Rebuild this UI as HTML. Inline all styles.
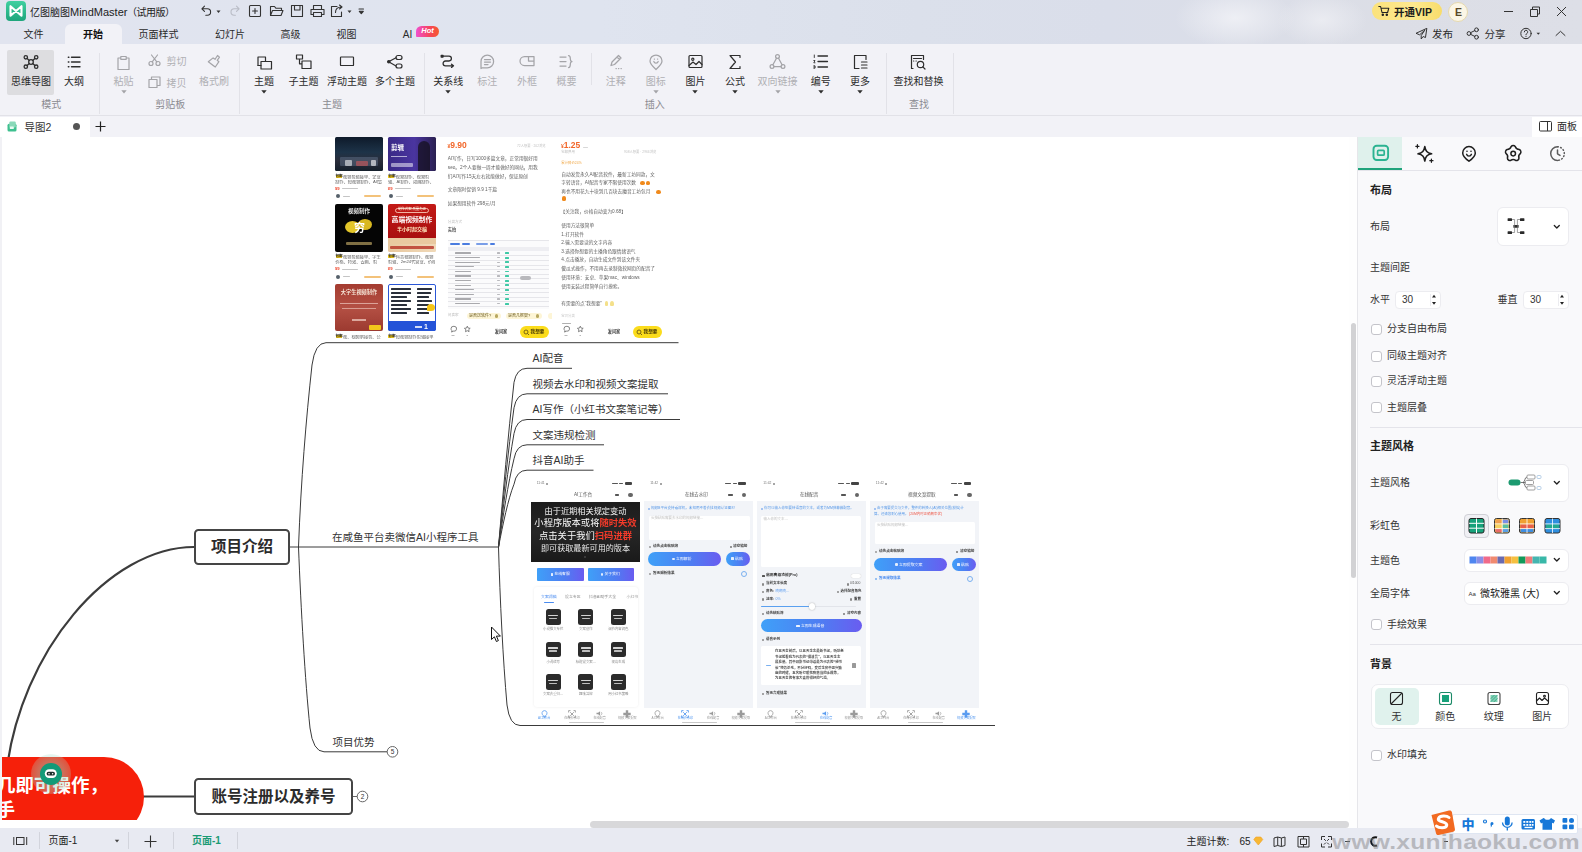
<!DOCTYPE html>
<html lang="zh-CN">
<head>
<meta charset="utf-8">
<title>亿图脑图MindMaster</title>
<style>
*{box-sizing:border-box;margin:0;padding:0}
html,body{width:1582px;height:852px;overflow:hidden;background:#fff}
body{font-family:"Liberation Sans","Noto Sans CJK SC",sans-serif;font-size:10.5px;color:#2a2a2a;position:relative}
.abs{position:absolute}
.t{position:absolute;white-space:nowrap;line-height:1;transform:translate(-50%,-50%)}
.tl{position:absolute;white-space:nowrap;line-height:1;transform:translate(0,-50%)}
svg{position:absolute;overflow:visible}
#titlebar{left:0;top:0;width:1582px;height:44px;background:radial-gradient(ellipse 60px 30px at 1235px 18px,rgba(240,241,246,.9),rgba(240,241,246,0)),radial-gradient(ellipse 45px 26px at 1322px 20px,rgba(238,239,244,.8),rgba(238,239,244,0)),linear-gradient(90deg,#e1e4ef 0%,#dfe4ef 38%,#dbe0eb 58%,#dadeea 70%,#dcdee6 88%,#dddfe7 100%)}
#ribbon{left:0;top:44px;width:1582px;height:72px;background:#f2f2f7;border-bottom:1px solid #e2e2e8}
#tabrow{left:0;top:116px;width:1582px;height:21px;background:#f2f2f7}
#status{left:0;top:828px;width:1582px;height:24px;background:#e8eaf2}
#side{left:1357px;top:137px;width:225px;height:691px;background:#f9f9fb;border-left:1px solid #e6e6ea}
.dis{color:#b0b0b4}
.grp{color:#8a8a90;font-size:10px}
.sep{position:absolute;width:1px;background:#e2e2e8}
.lbl{font-size:10.5px}
.sp{font-size:10px;color:#333}
.box{position:absolute;background:#fff;border:1px solid #ececf0;border-radius:6px}
.cb{position:absolute;width:11px;height:11px;border:1px solid #c4c4ca;border-radius:3px;background:#fff}
</style>
</head>
<body>
<div id="titlebar" class="abs"></div>
<div id="ribbon" class="abs"></div>
<div id="tabrow" class="abs"></div>
<div class="abs" style="left:0;top:820px;width:1357px;height:8px;background:#fff"></div>
<div id="canvas" class="abs" style="left:0;top:137px;width:1357px;height:683px;background:#fff;overflow:hidden">
<div class="abs" style="left:0;top:-137px;width:1357px;height:829px">
<svg style="left:0;top:137px" width="1357" height="692" viewBox="0 137 1357 692"><path d="M6,775 C20,650 110,547 194,547" stroke="#3c3c3c" stroke-width="2.200" fill="none"/><path d="M140,796.500H195" stroke="#3c3c3c" stroke-width="2.200" fill="none"/><path d="M290,547H498.500" stroke="#3a3a3a" stroke-width="1" fill="none"/><path d="M298.500,547C301,480 306,420 312,365Q315,342.700 326,342.700H678.500" stroke="#3a3a3a" stroke-width="1" fill="none"/><path d="M298.500,547C301,610 305,680 310,728Q313,751.800 324,751.800H387" stroke="#3a3a3a" stroke-width="1" fill="none"/><path d="M498.500,547C503.0,493.4 508.0,436.2 514.0,382.3Q516.5,368.3 527,368.3H572" stroke="#3a3a3a" stroke-width="1" fill="none"/><path d="M498.500,547C503.0,501.0 508.0,452.0 514.0,407.8Q516.5,393.8 527,393.8H668" stroke="#3a3a3a" stroke-width="1" fill="none"/><path d="M498.500,547C503.0,508.8 508.0,467.9 514.0,433.5Q516.5,419.5 527,419.5H680" stroke="#3a3a3a" stroke-width="1" fill="none"/><path d="M498.500,547C503.0,516.3 508.0,483.6 514.0,458.8Q516.5,444.8 527,444.8H604" stroke="#3a3a3a" stroke-width="1" fill="none"/><path d="M498.500,547C503.0,524.0 508.0,499.4 514.0,484.2Q516.5,470.2 527,470.2H593.5" stroke="#3a3a3a" stroke-width="1" fill="none"/><path d="M498.500,547C500,600 503,660 507,705Q509.500,725.500 520,725.500H995" stroke="#3a3a3a" stroke-width="1" fill="none"/><circle cx="392.500" cy="751.800" r="5.300" fill="#fff" stroke="#555" stroke-width=".9"/><circle cx="362.500" cy="796.500" r="5.300" fill="#fff" stroke="#555" stroke-width=".9"/><path d="M352.500,796.500h4.700" stroke="#555" stroke-width=".9"/></svg>
<div class="t" style="left:392.5px;top:752.0px;font-size:6.5px;color:#333;font-weight:400;">5</div>
<div class="t" style="left:362.5px;top:796.7px;font-size:6.5px;color:#333;font-weight:400;">2</div>
<div class="abs" style="left:194px;top:528.500px;width:96px;height:36.500px;border:2px solid #454545;border-radius:4.500px;background:#fff"></div>
<div class="t" style="left:242.0px;top:547.0px;font-size:15.5px;color:#2b2b2b;font-weight:700;">项目介绍</div>
<div class="abs" style="left:194px;top:778px;width:159px;height:37px;border:2px solid #454545;border-radius:4.500px;background:#fff"></div>
<div class="t" style="left:273.5px;top:796.5px;font-size:15.5px;color:#2b2b2b;font-weight:700;">账号注册以及养号</div>
<div class="tl" style="left:332.0px;top:536.8px;font-size:10.5px;color:#333;font-weight:400;">在咸鱼平台卖微信AI小程序工具</div>
<div class="tl" style="left:332.5px;top:741.5px;font-size:10.5px;color:#333;font-weight:400;">项目优势</div>
<div class="tl" style="left:532.5px;top:358.0px;font-size:10.5px;color:#333;font-weight:400;">AI配音</div>
<div class="tl" style="left:532.5px;top:383.7px;font-size:10.5px;color:#333;font-weight:400;">视频去水印和视频文案提取</div>
<div class="tl" style="left:532.5px;top:409.3px;font-size:10.5px;color:#333;font-weight:400;">AI写作（小红书文案笔记等）</div>
<div class="tl" style="left:532.5px;top:434.7px;font-size:10.5px;color:#333;font-weight:400;">文案违规检测</div>
<div class="tl" style="left:532.5px;top:460.0px;font-size:10.5px;color:#333;font-weight:400;">抖音AI助手</div>
<div class="abs" style="left:-60px;top:757px;width:204px;height:80px;border-radius:0 40px 40px 0;background:#f6200a"></div>
<div class="tl" style="left:-3.0px;top:786.0px;font-size:18.5px;color:#fff;font-weight:700;letter-spacing:0px">几即可操作，</div>
<div class="tl" style="left:-3.5px;top:810.2px;font-size:18.5px;color:#fff;font-weight:700;">手</div>
<div class="abs" style="left:30.500px;top:753.500px;width:40px;height:40px;border-radius:50%;background:radial-gradient(circle,rgba(150,215,195,.42) 45%,rgba(170,225,205,.26) 70%,rgba(190,230,215,.1) 100%)"></div>
<div class="abs" style="left:39.500px;top:762.500px;width:22.500px;height:22.500px;border-radius:50%;background:#129a78"></div>
<svg style="left:44px;top:768px" width="14" height="12" viewBox="0 0 14 12"><rect x=".8" y="1.300" width="12" height="8.600" rx="4.300" fill="#fff"/><rect x="2.600" y="3.700" width="8.400" height="3.900" rx="1.950" fill="#1d2f2c"/><circle cx="5" cy="5.650" r=".75" fill="#fff"/><circle cx="8.600" cy="5.650" r=".75" fill="#fff"/></svg>
<svg style="left:490px;top:626px" width="13" height="18" viewBox="0 0 13 18"><path d="M1.500 1v12.500l2.900-2.700 2 4.700 2-.9-2-4.500h4z" fill="#fff" stroke="#111" stroke-width="1" stroke-linejoin="round"/></svg>
<div class="abs" style="left:0;top:0;width:2px;height:829px;background:#f1f1f5"></div>
<div class="abs" style="left:0;top:0;width:1357px;height:829px;filter:blur(.45px)">
<div class="abs" style="left:335.0px;top:137.0px;width:48.4px;height:34.3px;background:linear-gradient(180deg,#0e1a2a,#1d3348 45%,#2a2d3a 70%,#15202c);border-radius:1.5px;"></div>
<div class="abs" style="left:340.0px;top:157.0px;width:38.0px;height:9.0px;background:rgba(120,140,170,.35);border-radius:1px;"></div>
<div class="abs" style="left:345.0px;top:160.0px;width:7.0px;height:6.0px;background:rgba(255,255,255,.55);border-radius:1px;"></div>
<div class="abs" style="left:356.0px;top:161.0px;width:12.0px;height:5.0px;background:rgba(220,90,90,.55);border-radius:1px;"></div>
<div class="abs" style="left:371.0px;top:160.0px;width:5.0px;height:6.0px;background:rgba(255,255,255,.6);border-radius:1px;"></div>
<div class="abs" style="left:387.8px;top:137.0px;width:48.4px;height:34.3px;background:linear-gradient(90deg,#3a2a86,#4a35a0 55%,#2a2050);border-radius:1.5px;"></div>
<div class="tl" style="left:391.0px;top:148.0px;font-size:6.5px;color:#fff;font-weight:700;">剪辑</div>
<div class="abs" style="left:391.0px;top:155.5px;width:16.0px;height:1.6px;background:rgba(255,255,255,.6);"></div>
<div class="abs" style="left:391.0px;top:163.0px;width:22.0px;height:3.5px;background:rgba(255,255,255,.5);border-radius:1px;"></div>
<div class="abs" style="left:418.0px;top:141.0px;width:12.0px;height:30.0px;background:rgba(20,16,30,.75);border-radius:6px 6px 0 0;"></div>
<div class="abs" style="left:335.0px;top:203.6px;width:48.4px;height:48.3px;background:#050505;border-radius:2px;"></div>
<div class="t" style="left:359.0px;top:212.0px;font-size:5.5px;color:#e8e8e8;font-weight:700;">视频制作</div>
<div class="abs" style="left:345.0px;top:221.0px;width:15.0px;height:12.0px;background:#e3c62a;border-radius:50%;"></div>
<div class="abs" style="left:358.0px;top:219.0px;width:14.0px;height:11.0px;background:#d9b820;border-radius:50%;"></div>
<div class="t" style="left:359.5px;top:228.0px;font-size:11px;color:#fff;font-weight:700;">穷</div>
<div class="abs" style="left:346.0px;top:241.5px;width:26.0px;height:3.4px;background:rgba(230,200,120,.55);border-radius:1px;"></div>
<div class="abs" style="left:387.8px;top:203.6px;width:48.4px;height:48.3px;background:linear-gradient(180deg,#c31a16,#a90f10 70%,#e9c9a0 71%,#e9c9a0 100%);border-radius:2px;"></div>
<div class="abs" style="left:387.8px;top:243.5px;width:48.4px;height:8.4px;background:linear-gradient(90deg,#e8c8a0,#f0d9b8);border-radius:0 0 2px 2px;"></div>
<div class="abs" style="left:395.0px;top:207.5px;width:34.0px;height:5.5px;background:rgba(255,255,255,.0);border-radius:3px;border:.6px solid rgba(255,220,200,.8);"></div>
<div class="t" style="left:412.0px;top:210.3px;font-size:3.4px;color:#ffe;font-weight:400;">制作式案 质量为正</div>
<div class="t" style="left:412.0px;top:220.0px;font-size:6.8px;color:#fff;font-weight:700;font-family:"Liberation Serif","Noto Serif CJK SC",serif;">高端视频制作</div>
<div class="t" style="left:412.0px;top:228.5px;font-size:5px;color:#ffe9c0;font-weight:700;">半小时起交稿</div>
<div class="abs" style="left:390.0px;top:245.5px;width:44.0px;height:3.6px;background:rgba(180,40,30,.75);border-radius:1px;"></div>
<div class="abs" style="left:335.0px;top:284.2px;width:48.4px;height:47.2px;background:linear-gradient(180deg,#a43c30,#b45044 50%,#9c3a30);border-radius:2px;"></div>
<div class="t" style="left:359.0px;top:293.0px;font-size:5.2px;color:#f6e6d8;font-weight:700;">大字生视频制作</div>
<div class="abs" style="left:340.0px;top:302.5px;width:38.0px;height:1.8px;background:rgba(255,235,225,.55);"></div>
<div class="abs" style="left:342.0px;top:307.5px;width:34.0px;height:1.8px;background:rgba(255,235,225,.5);"></div>
<div class="abs" style="left:352.0px;top:319.0px;width:14.0px;height:2.4px;background:rgba(255,235,225,.6);"></div>
<div class="abs" style="left:368.5px;top:324.5px;width:12.5px;height:5.0px;background:#f2c81c;border-radius:1px;"></div>
<div class="abs" style="left:387.8px;top:284.2px;width:48.4px;height:47.2px;background:#fff;border-radius:2px;border:1.500px solid #2a56d6;"></div>
<div class="abs" style="left:391.0px;top:287.5px;width:20.0px;height:2.2px;background:#2a2f3a;border-radius:0.5px;"></div>
<div class="abs" style="left:417.0px;top:287.5px;width:15.0px;height:2.2px;background:#2a2f3a;border-radius:0.5px;"></div>
<div class="abs" style="left:391.0px;top:291.6px;width:20.0px;height:2.2px;background:#2a2f3a;border-radius:0.5px;"></div>
<div class="abs" style="left:417.0px;top:291.6px;width:14.0px;height:2.2px;background:#2a2f3a;border-radius:0.5px;"></div>
<div class="abs" style="left:391.0px;top:295.7px;width:16.0px;height:2.2px;background:#2a2f3a;border-radius:0.5px;"></div>
<div class="abs" style="left:417.0px;top:295.7px;width:12.0px;height:2.2px;background:#2a2f3a;border-radius:0.5px;"></div>
<div class="abs" style="left:391.0px;top:299.8px;width:20.0px;height:2.2px;background:#2a2f3a;border-radius:0.5px;"></div>
<div class="abs" style="left:417.0px;top:299.8px;width:15.0px;height:2.2px;background:#2a2f3a;border-radius:0.5px;"></div>
<div class="abs" style="left:391.0px;top:303.9px;width:16.0px;height:2.2px;background:#2a2f3a;border-radius:0.5px;"></div>
<div class="abs" style="left:417.0px;top:303.9px;width:12.0px;height:2.2px;background:#2a2f3a;border-radius:0.5px;"></div>
<div class="abs" style="left:391.0px;top:308.0px;width:20.0px;height:2.2px;background:#2a2f3a;border-radius:0.5px;"></div>
<div class="abs" style="left:417.0px;top:308.0px;width:14.0px;height:2.2px;background:#2a2f3a;border-radius:0.5px;"></div>
<div class="abs" style="left:391.0px;top:312.1px;width:16.0px;height:2.2px;background:#2a2f3a;border-radius:0.5px;"></div>
<div class="abs" style="left:417.0px;top:312.1px;width:12.0px;height:2.2px;background:#2a2f3a;border-radius:0.5px;"></div>
<div class="abs" style="left:387.8px;top:321.0px;width:48.4px;height:10.4px;background:#2453d8;border-radius:0 0 2px 2px;"></div>
<div class="t" style="left:426.0px;top:326.3px;font-size:7px;color:#fff;font-weight:700;">1</div>
<div class="abs" style="left:415.0px;top:326.0px;width:7.0px;height:2.0px;background:rgba(255,255,255,.8);"></div>
<div class="abs" style="left:426.5px;top:304.0px;width:8.0px;height:7.0px;background:#f5c518;border-radius:50% 50% 50% 10%;"></div>
<div class="abs" style="left:335.5px;top:175.0px;width:6.0px;height:3.0px;background:#f2cb1a;border-radius:0.5px;"></div>
<div class="tl" style="left:335.5px;top:176.5px;font-size:3.6px;color:#222;font-weight:700;">包邮</div>
<div class="tl" style="left:343.0px;top:176.7px;font-size:4.2px;color:#5a5a5a;font-weight:400;max-width:40px;overflow:hidden;">视频剪辑接单、企业</div>
<div class="tl" style="left:335.3px;top:182.0px;font-size:4.2px;color:#5a5a5a;font-weight:400;max-width:47px;overflow:hidden;">制作、短视频制作、AI绘制</div>
<div class="tl" style="left:335.0px;top:188.6px;font-size:4.2px;color:#f0452a;font-weight:700;">¥9</div>
<div class="abs" style="left:342.0px;top:187.7px;width:16.0px;height:1.8px;background:#c6c6c6;border-radius:1px;"></div>
<div class="abs" style="left:336.0px;top:194.4px;width:4.0px;height:4.0px;background:#55606a;border-radius:50%;"></div>
<div class="abs" style="left:343.0px;top:195.6px;width:7.0px;height:1.6px;background:#c4c4c4;border-radius:1px;"></div>
<div class="abs" style="left:364.0px;top:195.4px;width:17.0px;height:2.0px;background:#f3c27a;border-radius:1px;"></div>
<div class="abs" style="left:388.3px;top:175.0px;width:6.0px;height:3.0px;background:#f2cb1a;border-radius:0.5px;"></div>
<div class="tl" style="left:388.3px;top:176.5px;font-size:3.6px;color:#222;font-weight:700;">包邮</div>
<div class="tl" style="left:395.8px;top:176.7px;font-size:4.2px;color:#5a5a5a;font-weight:400;max-width:40px;overflow:hidden;">视频制作、视频剪</div>
<div class="tl" style="left:388.1px;top:182.0px;font-size:4.2px;color:#5a5a5a;font-weight:400;max-width:47px;overflow:hidden;">辑、AI制作、动画制作、</div>
<div class="tl" style="left:387.8px;top:188.6px;font-size:4.2px;color:#f0452a;font-weight:700;">¥9</div>
<div class="abs" style="left:394.8px;top:187.7px;width:16.0px;height:1.8px;background:#c6c6c6;border-radius:1px;"></div>
<div class="abs" style="left:388.8px;top:194.4px;width:4.0px;height:4.0px;background:#55606a;border-radius:50%;"></div>
<div class="abs" style="left:395.8px;top:195.6px;width:7.0px;height:1.6px;background:#c4c4c4;border-radius:1px;"></div>
<div class="abs" style="left:416.8px;top:195.4px;width:17.0px;height:2.0px;background:#f3c27a;border-radius:1px;"></div>
<div class="abs" style="left:335.5px;top:255.0px;width:6.0px;height:3.0px;background:#f2cb1a;border-radius:0.5px;"></div>
<div class="tl" style="left:335.5px;top:256.5px;font-size:3.6px;color:#222;font-weight:700;">包邮</div>
<div class="tl" style="left:343.0px;top:256.7px;font-size:4.2px;color:#5a5a5a;font-weight:400;max-width:40px;overflow:hidden;">视频剪辑接单、学生</div>
<div class="tl" style="left:335.3px;top:262.0px;font-size:4.2px;color:#5a5a5a;font-weight:400;max-width:47px;overflow:hidden;">价格、特效、去画、剪</div>
<div class="tl" style="left:335.0px;top:269.4px;font-size:4.2px;color:#f0452a;font-weight:700;">¥9</div>
<div class="abs" style="left:342.0px;top:268.5px;width:16.0px;height:1.8px;background:#c6c6c6;border-radius:1px;"></div>
<div class="abs" style="left:336.0px;top:274.7px;width:4.0px;height:4.0px;background:#55606a;border-radius:50%;"></div>
<div class="abs" style="left:343.0px;top:275.9px;width:7.0px;height:1.6px;background:#c4c4c4;border-radius:1px;"></div>
<div class="abs" style="left:364.0px;top:275.7px;width:17.0px;height:2.0px;background:#f3c27a;border-radius:1px;"></div>
<div class="abs" style="left:388.3px;top:255.0px;width:6.0px;height:3.0px;background:#f2cb1a;border-radius:0.5px;"></div>
<div class="tl" style="left:388.3px;top:256.5px;font-size:3.6px;color:#222;font-weight:700;">包邮</div>
<div class="tl" style="left:395.8px;top:256.7px;font-size:4.2px;color:#5a5a5a;font-weight:400;max-width:40px;overflow:hidden;">抖音视频制作、视频</div>
<div class="tl" style="left:388.1px;top:262.0px;font-size:4.2px;color:#5a5a5a;font-weight:400;max-width:47px;overflow:hidden;">剪辑、2m24代营业、价格</div>
<div class="tl" style="left:387.8px;top:269.4px;font-size:4.2px;color:#f0452a;font-weight:700;">¥9</div>
<div class="abs" style="left:394.8px;top:268.5px;width:16.0px;height:1.8px;background:#c6c6c6;border-radius:1px;"></div>
<div class="abs" style="left:388.8px;top:274.7px;width:4.0px;height:4.0px;background:#55606a;border-radius:50%;"></div>
<div class="abs" style="left:395.8px;top:275.9px;width:7.0px;height:1.6px;background:#c4c4c4;border-radius:1px;"></div>
<div class="abs" style="left:416.8px;top:275.7px;width:17.0px;height:2.0px;background:#f3c27a;border-radius:1px;"></div>
<div class="abs" style="left:335.5px;top:335.1px;width:6.0px;height:3.0px;background:#f2cb1a;border-radius:0.5px;"></div>
<div class="tl" style="left:335.5px;top:336.6px;font-size:3.6px;color:#222;font-weight:700;">包邮</div>
<div class="tl" style="left:343.0px;top:336.8px;font-size:4.2px;color:#5a5a5a;font-weight:400;max-width:40px;overflow:hidden;">视、视频承接剪、公</div>
<div class="abs" style="left:388.3px;top:335.1px;width:6.0px;height:3.0px;background:#f2cb1a;border-radius:0.5px;"></div>
<div class="tl" style="left:388.3px;top:336.6px;font-size:3.6px;color:#222;font-weight:700;">包邮</div>
<div class="tl" style="left:395.8px;top:336.8px;font-size:4.2px;color:#5a5a5a;font-weight:400;max-width:40px;overflow:hidden;">短视频制作剪辑接单</div>
<div class="tl" style="left:447.5px;top:144.8px;font-size:8.5px;color:#f2672a;font-weight:700;"><span style="font-size:5px">¥</span>9.90</div>
<div class="tl" style="left:517.0px;top:146.5px;font-size:3.3px;color:#c4c4c4;font-weight:400;">72人想要 · 202浏览</div>
<div class="tl" style="left:447.8px;top:158.9px;font-size:4.7px;color:#5e5e5e;font-weight:400;">AI写作，日写1000多篇文章，正常用很好用</div>
<div class="tl" style="left:447.8px;top:167.7px;font-size:4.7px;color:#5e5e5e;font-weight:400;">seo。2个人要做一周才能做好的网站，用我</div>
<div class="tl" style="left:447.8px;top:176.5px;font-size:4.7px;color:#5e5e5e;font-weight:400;">们AI写作15天左右就能做好，保证原创</div>
<div class="tl" style="left:447.8px;top:190.2px;font-size:4.7px;color:#5e5e5e;font-weight:400;">文章限时促销 9.9  1千篇</div>
<div class="tl" style="left:447.8px;top:204.4px;font-size:4.7px;color:#5e5e5e;font-weight:400;">如果想用软件 298元/月</div>
<div class="tl" style="left:447.8px;top:222.8px;font-size:3.6px;color:#bdbdbd;font-weight:400;">分类方式</div>
<div class="tl" style="left:447.8px;top:230.0px;font-size:4.2px;color:#555;font-weight:700;">实拍</div>
<div class="abs" style="left:447.5px;top:240.0px;width:101.0px;height:69.0px;background:#fbfbfc;border-top:.5px solid #e6e6ea;"></div>
<div class="abs" style="left:449.5px;top:243.0px;width:10.0px;height:1.6px;background:#4a7ce0;border-radius:1px;"></div>
<div class="abs" style="left:461.5px;top:243.0px;width:8.0px;height:1.6px;background:#4a7ce0;border-radius:1px;"></div>
<div class="abs" style="left:475.5px;top:243.0px;width:12.0px;height:1.6px;background:#7a9ee8;border-radius:1px;"></div>
<div class="abs" style="left:489.5px;top:243.0px;width:5.0px;height:1.6px;background:#4a7ce0;border-radius:1px;"></div>
<div class="abs" style="left:447.5px;top:247.0px;width:101.0px;height:3.5px;background:#eeeef2;"></div>
<div class="abs" style="left:447.5px;top:255.3px;width:101.0px;height:0.4px;background:#e6e6ea;"></div>
<div class="abs" style="left:454.5px;top:252.4px;width:16.0px;height:1.3px;background:#a9a9ad;border-radius:0.5px;"></div>
<div class="abs" style="left:496.5px;top:252.4px;width:3.0px;height:1.3px;background:#b9b9bd;border-radius:0.5px;"></div>
<div class="abs" style="left:504.5px;top:252.2px;width:4.5px;height:1.8px;background:#3fc9a6;border-radius:0.5px;"></div>
<div class="abs" style="left:447.5px;top:259.9px;width:101.0px;height:0.4px;background:#e6e6ea;"></div>
<div class="abs" style="left:454.5px;top:257.0px;width:25.0px;height:1.3px;background:#a9a9ad;border-radius:0.5px;"></div>
<div class="abs" style="left:496.5px;top:257.0px;width:3.0px;height:1.3px;background:#b9b9bd;border-radius:0.5px;"></div>
<div class="abs" style="left:504.5px;top:256.8px;width:4.5px;height:1.8px;background:#3fc9a6;border-radius:0.5px;"></div>
<div class="abs" style="left:447.5px;top:264.5px;width:101.0px;height:0.4px;background:#e6e6ea;"></div>
<div class="abs" style="left:454.5px;top:261.6px;width:25.0px;height:1.3px;background:#a9a9ad;border-radius:0.5px;"></div>
<div class="abs" style="left:496.5px;top:261.6px;width:3.0px;height:1.3px;background:#b9b9bd;border-radius:0.5px;"></div>
<div class="abs" style="left:504.5px;top:261.4px;width:4.5px;height:1.8px;background:#3fc9a6;border-radius:0.5px;"></div>
<div class="abs" style="left:447.5px;top:269.1px;width:101.0px;height:0.4px;background:#e6e6ea;"></div>
<div class="abs" style="left:454.5px;top:266.2px;width:19.0px;height:1.3px;background:#a9a9ad;border-radius:0.5px;"></div>
<div class="abs" style="left:496.5px;top:266.2px;width:3.0px;height:1.3px;background:#b9b9bd;border-radius:0.5px;"></div>
<div class="abs" style="left:504.5px;top:266.0px;width:4.5px;height:1.8px;background:#3fc9a6;border-radius:0.5px;"></div>
<div class="abs" style="left:447.5px;top:273.7px;width:101.0px;height:0.4px;background:#e6e6ea;"></div>
<div class="abs" style="left:454.5px;top:270.8px;width:16.0px;height:1.3px;background:#a9a9ad;border-radius:0.5px;"></div>
<div class="abs" style="left:496.5px;top:270.8px;width:3.0px;height:1.3px;background:#b9b9bd;border-radius:0.5px;"></div>
<div class="abs" style="left:504.5px;top:270.6px;width:4.5px;height:1.8px;background:#3fc9a6;border-radius:0.5px;"></div>
<div class="abs" style="left:447.5px;top:278.3px;width:101.0px;height:0.4px;background:#e6e6ea;"></div>
<div class="abs" style="left:454.5px;top:275.4px;width:16.0px;height:1.3px;background:#a9a9ad;border-radius:0.5px;"></div>
<div class="abs" style="left:496.5px;top:275.4px;width:3.0px;height:1.3px;background:#b9b9bd;border-radius:0.5px;"></div>
<div class="abs" style="left:504.5px;top:275.2px;width:4.5px;height:1.8px;background:#3fc9a6;border-radius:0.5px;"></div>
<div class="abs" style="left:447.5px;top:282.9px;width:101.0px;height:0.4px;background:#e6e6ea;"></div>
<div class="abs" style="left:454.5px;top:280.0px;width:16.0px;height:1.3px;background:#a9a9ad;border-radius:0.5px;"></div>
<div class="abs" style="left:496.5px;top:280.0px;width:3.0px;height:1.3px;background:#b9b9bd;border-radius:0.5px;"></div>
<div class="abs" style="left:504.5px;top:279.8px;width:4.5px;height:1.8px;background:#3fc9a6;border-radius:0.5px;"></div>
<div class="abs" style="left:447.5px;top:287.5px;width:101.0px;height:0.4px;background:#e6e6ea;"></div>
<div class="abs" style="left:454.5px;top:284.6px;width:16.0px;height:1.3px;background:#a9a9ad;border-radius:0.5px;"></div>
<div class="abs" style="left:496.5px;top:284.6px;width:3.0px;height:1.3px;background:#b9b9bd;border-radius:0.5px;"></div>
<div class="abs" style="left:504.5px;top:284.4px;width:4.5px;height:1.8px;background:#3fc9a6;border-radius:0.5px;"></div>
<div class="abs" style="left:447.5px;top:292.1px;width:101.0px;height:0.4px;background:#e6e6ea;"></div>
<div class="abs" style="left:454.5px;top:289.2px;width:19.0px;height:1.3px;background:#a9a9ad;border-radius:0.5px;"></div>
<div class="abs" style="left:496.5px;top:289.2px;width:3.0px;height:1.3px;background:#b9b9bd;border-radius:0.5px;"></div>
<div class="abs" style="left:504.5px;top:289.0px;width:4.5px;height:1.8px;background:#3fc9a6;border-radius:0.5px;"></div>
<div class="abs" style="left:447.5px;top:296.7px;width:101.0px;height:0.4px;background:#e6e6ea;"></div>
<div class="abs" style="left:454.5px;top:293.8px;width:19.0px;height:1.3px;background:#a9a9ad;border-radius:0.5px;"></div>
<div class="abs" style="left:496.5px;top:293.8px;width:3.0px;height:1.3px;background:#b9b9bd;border-radius:0.5px;"></div>
<div class="abs" style="left:504.5px;top:293.6px;width:4.5px;height:1.8px;background:#3fc9a6;border-radius:0.5px;"></div>
<div class="abs" style="left:447.5px;top:301.3px;width:101.0px;height:0.4px;background:#e6e6ea;"></div>
<div class="abs" style="left:454.5px;top:298.4px;width:16.0px;height:1.3px;background:#a9a9ad;border-radius:0.5px;"></div>
<div class="abs" style="left:496.5px;top:298.4px;width:3.0px;height:1.3px;background:#b9b9bd;border-radius:0.5px;"></div>
<div class="abs" style="left:504.5px;top:298.2px;width:4.5px;height:1.8px;background:#3fc9a6;border-radius:0.5px;"></div>
<div class="abs" style="left:447.5px;top:305.9px;width:101.0px;height:0.4px;background:#e6e6ea;"></div>
<div class="abs" style="left:454.5px;top:303.0px;width:25.0px;height:1.3px;background:#a9a9ad;border-radius:0.5px;"></div>
<div class="abs" style="left:496.5px;top:303.0px;width:3.0px;height:1.3px;background:#b9b9bd;border-radius:0.5px;"></div>
<div class="abs" style="left:504.5px;top:302.8px;width:4.5px;height:1.8px;background:#3fc9a6;border-radius:0.5px;"></div>
<div class="abs" style="left:519.5px;top:276.0px;width:11.0px;height:4.0px;background:#b8b8bc;border-radius:2px;"></div>
<div class="tl" style="left:447.8px;top:316.0px;font-size:3.6px;color:#bdbdbd;font-weight:400;">问卖家</div>
<div class="abs" style="left:466.5px;top:312.5px;width:34.0px;height:6.5px;background:#fdf5d6;border-radius:3px;"></div>
<div class="tl" style="left:469.0px;top:316.0px;font-size:4px;color:#6a5a20;font-weight:400;">是否送软件?</div>
<div class="abs" style="left:494.5px;top:314.0px;width:3.5px;height:3.5px;background:#b8a860;border-radius:50%;"></div>
<div class="abs" style="left:505.5px;top:312.5px;width:36.0px;height:6.5px;background:#fdf5d6;border-radius:3px;"></div>
<div class="tl" style="left:508.0px;top:316.0px;font-size:4px;color:#6a5a20;font-weight:400;">是否几框架?</div>
<div class="abs" style="left:535.5px;top:314.0px;width:3.5px;height:3.5px;background:#b8a860;border-radius:50%;"></div>
<div class="abs" style="left:547.5px;top:312.5px;width:4.0px;height:6.5px;background:#fdf5d6;border-radius:3px 0 0 3px;"></div>
<svg style="left:449.5px;top:325px" width="24" height="13" viewBox="0 0 24 13" fill="none" stroke="#666" stroke-width=".8"><path d="M1 3.800a2.800 2.500 0 1 1 2.200 2.400l-1.600 .9 .3-1.500a2.400 2.400 0 0 1-.9-1.800z"/><path d="M17.300 1.200l.9 1.900 2 .2-1.500 1.400 .4 2-1.800-1-1.800 1 .4-2-1.500-1.400 2-.2z"/><path d="M1.500 10.500h3M16.500 10.500h1.500" stroke="#bbb" stroke-width="1"/></svg>
<div class="t" style="left:501.0px;top:332.0px;font-size:4.2px;color:#444;font-weight:700;">发问家</div>
<div class="abs" style="left:519.5px;top:326.3px;width:29.0px;height:11.6px;background:#fbdc1c;border-radius:6px;"></div>
<svg style="left:523.0px;top:329px" width="7" height="7" viewBox="0 0 7 7" fill="none" stroke="#5a4a10" stroke-width=".8"><circle cx="3" cy="3" r="2"/><path d="M4.500 4.500l1.500 1.500"/></svg>
<div class="t" style="left:537.5px;top:332.2px;font-size:4.6px;color:#4a3c08;font-weight:700;">我想要</div>
<div class="tl" style="left:561.0px;top:144.8px;font-size:8.5px;color:#f2672a;font-weight:700;"><span style="font-size:5px">¥</span>1.25</div>
<div class="abs" style="left:583.0px;top:146.5px;width:5.0px;height:1.5px;background:#d8d8d8;border-radius:1px;"></div>
<div class="tl" style="left:561.3px;top:153.3px;font-size:3.4px;color:#c4c4c4;font-weight:400;">包邮费用</div>
<div class="tl" style="left:624.0px;top:153.3px;font-size:3.3px;color:#c4c4c4;font-weight:400;">908人想要 · 2966浏览</div>
<div class="tl" style="left:561.3px;top:163.5px;font-size:3.4px;color:#f0a848;font-weight:400;">累计降价24%</div>
<div class="tl" style="left:561.3px;top:174.7px;font-size:4.7px;color:#5e5e5e;font-weight:400;">自动发货永久AI配音软件，最新工坊同款，文</div>
<div class="tl" style="left:561.3px;top:183.0px;font-size:4.7px;color:#5e5e5e;font-weight:400;">字转语音，AI配音专家不限使用次数</div>
<div class="abs" style="left:640.0px;top:181.0px;width:4.5px;height:4.3px;background:#f08a1c;border-radius:50% 50% 40% 40%;"></div>
<div class="abs" style="left:645.5px;top:181.0px;width:4.5px;height:4.3px;background:#f08a1c;border-radius:50% 50% 40% 40%;"></div>
<div class="tl" style="left:561.3px;top:191.5px;font-size:4.7px;color:#5e5e5e;font-weight:400;">再也不用花九十块到几百块去魔音工坊包月</div>
<div class="abs" style="left:656.0px;top:189.5px;width:4.5px;height:4.3px;background:#f08a1c;border-radius:50% 50% 40% 40%;"></div>
<div class="abs" style="left:561.5px;top:196.3px;width:4.5px;height:4.3px;background:#f08a1c;border-radius:50% 50% 40% 40%;"></div>
<div class="tl" style="left:560.5px;top:212.2px;font-size:4.7px;color:#5e5e5e;font-weight:400;">【关注我，价格自动变为0.68】</div>
<div class="tl" style="left:561.3px;top:226.3px;font-size:4.7px;color:#5e5e5e;font-weight:400;">使用方法很简单</div>
<div class="tl" style="left:561.3px;top:234.8px;font-size:4.7px;color:#5e5e5e;font-weight:400;">1.打开软件</div>
<div class="tl" style="left:561.3px;top:243.2px;font-size:4.7px;color:#5e5e5e;font-weight:400;">2.输入需要读的文字内容</div>
<div class="tl" style="left:561.3px;top:251.9px;font-size:4.7px;color:#5e5e5e;font-weight:400;">3.选择你想要的主播角色跟情绪语气</div>
<div class="tl" style="left:561.3px;top:260.4px;font-size:4.7px;color:#5e5e5e;font-weight:400;">4.点击播放，自动生成文件到该文件夹</div>
<div class="tl" style="left:561.3px;top:269.4px;font-size:4.7px;color:#5e5e5e;font-weight:400;">傻瓜式操作，不用再去录制微软网页的配音了</div>
<div class="tl" style="left:561.3px;top:278.0px;font-size:4.7px;color:#5e5e5e;font-weight:400;">使用环境：安卓、苹果mac、windows</div>
<div class="tl" style="left:561.3px;top:286.5px;font-size:4.7px;color:#5e5e5e;font-weight:400;">使用安装过程简单自行摸索。</div>
<div class="tl" style="left:561.3px;top:303.5px;font-size:4.7px;color:#5e5e5e;font-weight:400;">有需要的点“我想要”</div>
<div class="abs" style="left:604.5px;top:301.3px;width:3.6px;height:5.0px;background:#f4e08a;border-radius:50% 50% 30% 30%;"></div>
<div class="abs" style="left:610.0px;top:301.3px;width:3.6px;height:5.0px;background:#f4e08a;border-radius:50% 50% 30% 30%;"></div>
<div class="tl" style="left:561.3px;top:317.0px;font-size:3.4px;color:#c8c8c8;font-weight:400;">宝贝分类</div>
<div class="abs" style="left:561.5px;top:322.5px;width:9.0px;height:1.3px;background:#b0b0b0;border-radius:1px;"></div>
<svg style="left:563.0px;top:325px" width="24" height="13" viewBox="0 0 24 13" fill="none" stroke="#666" stroke-width=".8"><path d="M1 3.800a2.800 2.500 0 1 1 2.200 2.400l-1.600 .9 .3-1.500a2.400 2.400 0 0 1-.9-1.800z"/><path d="M17.300 1.200l.9 1.900 2 .2-1.500 1.400 .4 2-1.800-1-1.800 1 .4-2-1.500-1.400 2-.2z"/><path d="M1.500 10.500h3M16.500 10.500h1.500" stroke="#bbb" stroke-width="1"/></svg>
<div class="t" style="left:614.0px;top:332.0px;font-size:4.2px;color:#444;font-weight:700;">发问家</div>
<div class="abs" style="left:632.5px;top:326.3px;width:29.0px;height:11.6px;background:#fbdc1c;border-radius:6px;"></div>
<svg style="left:636.0px;top:329px" width="7" height="7" viewBox="0 0 7 7" fill="none" stroke="#5a4a10" stroke-width=".8"><circle cx="3" cy="3" r="2"/><path d="M4.500 4.500l1.500 1.500"/></svg>
<div class="t" style="left:650.5px;top:332.2px;font-size:4.6px;color:#4a3c08;font-weight:700;">我想要</div>
<div class="abs" style="left:530.7px;top:477.5px;width:109.7px;height:245.5px;background:#fff;"></div>
<div class="abs" style="left:530.7px;top:477.5px;width:109.7px;height:23.5px;background:#fff;"></div>
<div class="tl" style="left:536.7px;top:483.5px;font-size:3.3px;color:#777;font-weight:400;">11:41</div>
<div class="abs" style="left:546.2px;top:482.6px;width:2.0px;height:2.0px;background:#888;border-radius:50%;"></div>
<div class="abs" style="left:611.7px;top:482.7px;width:6.0px;height:1.6px;background:#555;border-radius:0.7px;"></div>
<div class="abs" style="left:619.2px;top:482.7px;width:4.0px;height:1.6px;background:#555;border-radius:0.7px;"></div>
<div class="abs" style="left:624.7px;top:482.2px;width:7.5px;height:2.6px;background:#444;border-radius:1px;"></div>
<div class="t" style="left:583.1px;top:495.3px;font-size:4.6px;color:#555;font-weight:400;">AI工作台</div>
<div class="abs" style="left:614.7px;top:494.0px;width:4.5px;height:1.5px;background:#555;border-radius:0.7px;"></div>
<div class="abs" style="left:628.2px;top:492.5px;width:4.6px;height:4.6px;background:#666;border-radius:50%;"></div>
<div class="abs" style="left:530.7px;top:707.5px;width:109.7px;height:15.5px;background:#fff;"></div>
<svg style="left:540.7px;top:709.500px" width="7" height="8" viewBox="0 0 7 8" fill="none" stroke="#5a9cf0" stroke-width=".8"><path d="M3.500 .6a2.600 2.600 0 0 1 1.300 4.800v1h-2.600v-1a2.600 2.600 0 0 1 1.300-4.800zM2.500 7.600h2"/></svg>
<div class="t" style="left:544.2px;top:719.3px;font-size:3.1px;color:#5a9cf0;font-weight:400;">AI工作台</div>
<svg style="left:567.9px;top:709.500px" width="8" height="8" viewBox="0 0 8 8" fill="none" stroke="#9a9a9a" stroke-width=".9"><path d="M.6 2.500v-1.900h1.900M5.500 .6h1.900v1.900M7.400 5.500v1.900h-1.900M2.500 7.400h-1.900v-1.900M2.200 2.200l3.600 3.600M5.800 2.200l-3.600 3.600"/></svg>
<div class="t" style="left:571.9px;top:719.3px;font-size:3.1px;color:#9a9a9a;font-weight:400;">在线去水印</div>
<svg style="left:595.6px;top:711px" width="8" height="5" viewBox="0 0 8 5" fill="#9a9a9a"><path d="M.5 1.700h1.600l2-1.500v4.600l-2-1.500h-1.600z"/><path d="M5.300 1.200c.8.800.8 1.800 0 2.600" fill="none" stroke="#9a9a9a" stroke-width=".7"/></svg>
<div class="t" style="left:599.6px;top:719.3px;font-size:3.1px;color:#9a9a9a;font-weight:400;">在线配音</div>
<svg style="left:623.3px;top:709.500px" width="8" height="8" viewBox="0 0 8 8" fill="#9a9a9a"><path d="M2.800 .3h2.400v2.500h2.500v2.400h-2.500v2.500h-2.400v-2.500h-2.500v-2.400h2.500z"/></svg>
<div class="t" style="left:627.3px;top:719.3px;font-size:3.1px;color:#9a9a9a;font-weight:400;">视频文案提取</div>
<div class="abs" style="left:568.7px;top:721.8px;width:35.0px;height:0.9px;background:#c8c8c8;border-radius:0.5px;"></div>
<div class="abs" style="left:644.2px;top:477.5px;width:109.3px;height:245.5px;background:#f2f4f8;"></div>
<div class="abs" style="left:644.2px;top:477.5px;width:109.3px;height:23.5px;background:#fff;"></div>
<div class="tl" style="left:650.2px;top:483.5px;font-size:3.3px;color:#777;font-weight:400;">11:42</div>
<div class="abs" style="left:659.7px;top:482.6px;width:2.0px;height:2.0px;background:#888;border-radius:50%;"></div>
<div class="abs" style="left:725.2px;top:482.7px;width:6.0px;height:1.6px;background:#555;border-radius:0.7px;"></div>
<div class="abs" style="left:732.7px;top:482.7px;width:4.0px;height:1.6px;background:#555;border-radius:0.7px;"></div>
<div class="abs" style="left:738.2px;top:482.2px;width:7.5px;height:2.6px;background:#444;border-radius:1px;"></div>
<div class="t" style="left:696.4px;top:495.3px;font-size:4.6px;color:#555;font-weight:400;">在线去水印</div>
<div class="abs" style="left:728.2px;top:494.0px;width:4.5px;height:1.5px;background:#555;border-radius:0.7px;"></div>
<div class="abs" style="left:741.7px;top:492.5px;width:4.6px;height:4.6px;background:#666;border-radius:50%;"></div>
<div class="abs" style="left:644.2px;top:707.5px;width:109.3px;height:15.5px;background:#fff;"></div>
<svg style="left:654.2px;top:709.500px" width="7" height="8" viewBox="0 0 7 8" fill="none" stroke="#9a9a9a" stroke-width=".8"><path d="M3.500 .6a2.600 2.600 0 0 1 1.300 4.800v1h-2.600v-1a2.600 2.600 0 0 1 1.300-4.800zM2.500 7.600h2"/></svg>
<div class="t" style="left:657.7px;top:719.3px;font-size:3.1px;color:#9a9a9a;font-weight:400;">AI工作台</div>
<svg style="left:681.4px;top:709.500px" width="8" height="8" viewBox="0 0 8 8" fill="none" stroke="#5a9cf0" stroke-width=".9"><path d="M.6 2.500v-1.900h1.900M5.500 .6h1.900v1.900M7.400 5.500v1.900h-1.900M2.500 7.400h-1.900v-1.900M2.200 2.200l3.600 3.600M5.800 2.200l-3.600 3.600"/></svg>
<div class="t" style="left:685.4px;top:719.3px;font-size:3.1px;color:#5a9cf0;font-weight:400;">在线去水印</div>
<svg style="left:709.1px;top:711px" width="8" height="5" viewBox="0 0 8 5" fill="#9a9a9a"><path d="M.5 1.700h1.600l2-1.500v4.600l-2-1.500h-1.600z"/><path d="M5.300 1.200c.8.800.8 1.800 0 2.600" fill="none" stroke="#9a9a9a" stroke-width=".7"/></svg>
<div class="t" style="left:713.1px;top:719.3px;font-size:3.1px;color:#9a9a9a;font-weight:400;">在线配音</div>
<svg style="left:736.8px;top:709.500px" width="8" height="8" viewBox="0 0 8 8" fill="#9a9a9a"><path d="M2.800 .3h2.400v2.500h2.500v2.400h-2.500v2.500h-2.400v-2.500h-2.500v-2.400h2.500z"/></svg>
<div class="t" style="left:740.8px;top:719.3px;font-size:3.1px;color:#9a9a9a;font-weight:400;">视频文案提取</div>
<div class="abs" style="left:682.2px;top:721.8px;width:35.0px;height:0.9px;background:#c8c8c8;border-radius:0.5px;"></div>
<div class="abs" style="left:757.3px;top:477.5px;width:108.7px;height:245.5px;background:#f2f4f8;"></div>
<div class="abs" style="left:757.3px;top:477.5px;width:108.7px;height:23.5px;background:#fff;"></div>
<div class="tl" style="left:763.3px;top:483.5px;font-size:3.3px;color:#777;font-weight:400;">11:42</div>
<div class="abs" style="left:772.8px;top:482.6px;width:2.0px;height:2.0px;background:#888;border-radius:50%;"></div>
<div class="abs" style="left:838.3px;top:482.7px;width:6.0px;height:1.6px;background:#555;border-radius:0.7px;"></div>
<div class="abs" style="left:845.8px;top:482.7px;width:4.0px;height:1.6px;background:#555;border-radius:0.7px;"></div>
<div class="abs" style="left:851.3px;top:482.2px;width:7.5px;height:2.6px;background:#444;border-radius:1px;"></div>
<div class="t" style="left:809.1px;top:495.3px;font-size:4.6px;color:#555;font-weight:400;">在线配音</div>
<div class="abs" style="left:841.3px;top:494.0px;width:4.5px;height:1.5px;background:#555;border-radius:0.7px;"></div>
<div class="abs" style="left:854.8px;top:492.5px;width:4.6px;height:4.6px;background:#666;border-radius:50%;"></div>
<div class="abs" style="left:757.3px;top:707.5px;width:108.7px;height:15.5px;background:#fff;"></div>
<svg style="left:767.3px;top:709.500px" width="7" height="8" viewBox="0 0 7 8" fill="none" stroke="#9a9a9a" stroke-width=".8"><path d="M3.500 .6a2.600 2.600 0 0 1 1.300 4.800v1h-2.600v-1a2.600 2.600 0 0 1 1.300-4.800zM2.500 7.600h2"/></svg>
<div class="t" style="left:770.8px;top:719.3px;font-size:3.1px;color:#9a9a9a;font-weight:400;">AI工作台</div>
<svg style="left:794.5px;top:709.500px" width="8" height="8" viewBox="0 0 8 8" fill="none" stroke="#9a9a9a" stroke-width=".9"><path d="M.6 2.500v-1.900h1.900M5.500 .6h1.900v1.900M7.400 5.500v1.900h-1.900M2.500 7.400h-1.900v-1.900M2.200 2.200l3.600 3.600M5.800 2.200l-3.600 3.600"/></svg>
<div class="t" style="left:798.5px;top:719.3px;font-size:3.1px;color:#9a9a9a;font-weight:400;">在线去水印</div>
<svg style="left:822.2px;top:711px" width="8" height="5" viewBox="0 0 8 5" fill="#5a9cf0"><path d="M.5 1.700h1.600l2-1.500v4.600l-2-1.500h-1.600z"/><path d="M5.300 1.200c.8.800.8 1.800 0 2.600" fill="none" stroke="#5a9cf0" stroke-width=".7"/></svg>
<div class="t" style="left:826.2px;top:719.3px;font-size:3.1px;color:#5a9cf0;font-weight:400;">在线配音</div>
<svg style="left:849.9px;top:709.500px" width="8" height="8" viewBox="0 0 8 8" fill="#9a9a9a"><path d="M2.800 .3h2.400v2.500h2.500v2.400h-2.500v2.500h-2.400v-2.500h-2.500v-2.400h2.500z"/></svg>
<div class="t" style="left:853.9px;top:719.3px;font-size:3.1px;color:#9a9a9a;font-weight:400;">视频文案提取</div>
<div class="abs" style="left:795.3px;top:721.8px;width:35.0px;height:0.9px;background:#c8c8c8;border-radius:0.5px;"></div>
<div class="abs" style="left:869.8px;top:477.5px;width:109.2px;height:245.5px;background:#f2f4f8;"></div>
<div class="abs" style="left:869.8px;top:477.5px;width:109.2px;height:23.5px;background:#fff;"></div>
<div class="tl" style="left:875.8px;top:483.5px;font-size:3.3px;color:#777;font-weight:400;">11:42</div>
<div class="abs" style="left:885.3px;top:482.6px;width:2.0px;height:2.0px;background:#888;border-radius:50%;"></div>
<div class="abs" style="left:950.8px;top:482.7px;width:6.0px;height:1.6px;background:#555;border-radius:0.7px;"></div>
<div class="abs" style="left:958.3px;top:482.7px;width:4.0px;height:1.6px;background:#555;border-radius:0.7px;"></div>
<div class="abs" style="left:963.8px;top:482.2px;width:7.5px;height:2.6px;background:#444;border-radius:1px;"></div>
<div class="t" style="left:921.9px;top:495.3px;font-size:4.6px;color:#555;font-weight:400;">视频文案提取</div>
<div class="abs" style="left:953.8px;top:494.0px;width:4.5px;height:1.5px;background:#555;border-radius:0.7px;"></div>
<div class="abs" style="left:967.3px;top:492.5px;width:4.6px;height:4.6px;background:#666;border-radius:50%;"></div>
<div class="abs" style="left:869.8px;top:707.5px;width:109.2px;height:15.5px;background:#fff;"></div>
<svg style="left:879.8px;top:709.500px" width="7" height="8" viewBox="0 0 7 8" fill="none" stroke="#9a9a9a" stroke-width=".8"><path d="M3.500 .6a2.600 2.600 0 0 1 1.300 4.800v1h-2.600v-1a2.600 2.600 0 0 1 1.300-4.800zM2.500 7.600h2"/></svg>
<div class="t" style="left:883.3px;top:719.3px;font-size:3.1px;color:#9a9a9a;font-weight:400;">AI工作台</div>
<svg style="left:907.0px;top:709.500px" width="8" height="8" viewBox="0 0 8 8" fill="none" stroke="#9a9a9a" stroke-width=".9"><path d="M.6 2.500v-1.900h1.900M5.500 .6h1.900v1.900M7.400 5.500v1.900h-1.900M2.500 7.400h-1.900v-1.900M2.200 2.200l3.600 3.600M5.800 2.200l-3.600 3.600"/></svg>
<div class="t" style="left:911.0px;top:719.3px;font-size:3.1px;color:#9a9a9a;font-weight:400;">在线去水印</div>
<svg style="left:934.7px;top:711px" width="8" height="5" viewBox="0 0 8 5" fill="#9a9a9a"><path d="M.5 1.700h1.600l2-1.500v4.600l-2-1.500h-1.600z"/><path d="M5.300 1.200c.8.800.8 1.800 0 2.600" fill="none" stroke="#9a9a9a" stroke-width=".7"/></svg>
<div class="t" style="left:938.7px;top:719.3px;font-size:3.1px;color:#9a9a9a;font-weight:400;">在线配音</div>
<svg style="left:962.4px;top:709.500px" width="8" height="8" viewBox="0 0 8 8" fill="#5a9cf0"><path d="M2.800 .3h2.400v2.500h2.500v2.400h-2.500v2.500h-2.400v-2.500h-2.500v-2.400h2.500z"/></svg>
<div class="t" style="left:966.4px;top:719.3px;font-size:3.1px;color:#5a9cf0;font-weight:400;">视频文案提取</div>
<div class="abs" style="left:907.8px;top:721.8px;width:35.0px;height:0.9px;background:#c8c8c8;border-radius:0.5px;"></div>
<div class="abs" style="left:530.7px;top:502.3px;width:109.7px;height:59.5px;background:linear-gradient(180deg,#1c1c1c,#262626 50%,#1a1a1a);"></div>
<div class="t" style="left:585.5px;top:511.8px;font-size:8.2px;color:#f2f2f2;font-weight:400;">由于近期相关规定变动</div>
<div class="t" style="left:585.5px;top:524.3px;font-size:9.3px;color:#fafafa;font-weight:400;">小程序版本或将<span style="color:#f03a2a;font-weight:700">随时失效</span></div>
<div class="t" style="left:585.5px;top:537.0px;font-size:9.3px;color:#fafafa;font-weight:400;">点击关于我们<span style="color:#f03a2a;font-weight:700">扫码进群</span></div>
<div class="t" style="left:585.5px;top:549.3px;font-size:8.1px;color:#e8e8e8;font-weight:400;">即可获取最新可用的版本</div>
<div class="abs" style="left:583.5px;top:555.8px;width:2.0px;height:2.0px;background:#444;border-radius:50%;"></div>
<div class="abs" style="left:537.4px;top:568.0px;width:46.3px;height:13.3px;background:linear-gradient(90deg,#3fa0f8,#4f7cf2 60%,#6a5cf0);border-radius:1px;"></div>
<div class="abs" style="left:588.0px;top:568.0px;width:46.3px;height:13.3px;background:linear-gradient(90deg,#3fa0f8,#4f7cf2 60%,#6a5cf0);border-radius:1px;"></div>
<div class="abs" style="left:550.5px;top:573.3px;width:2.6px;height:3.0px;background:rgba(255,255,255,.85);border-radius:0.5px;"></div>
<div class="tl" style="left:554.5px;top:574.7px;font-size:3.8px;color:#fff;font-weight:400;">在线客服</div>
<div class="abs" style="left:600.5px;top:573.3px;width:2.6px;height:3.0px;background:rgba(255,255,255,.85);border-radius:50%;"></div>
<div class="tl" style="left:604.5px;top:574.7px;font-size:3.8px;color:#fff;font-weight:400;">关于我们</div>
<div class="abs" style="left:533.5px;top:586.5px;width:104.0px;height:120.0px;background:#fff;border-radius:3px;box-shadow:0 0 3px rgba(0,0,0,.08);"></div>
<div class="tl" style="left:541.0px;top:596.5px;font-size:3.9px;color:#4a8cf0;font-weight:400;">文案润稿</div>
<div class="abs" style="left:543.5px;top:602.0px;width:10.5px;height:1.0px;background:#4a8cf0;border-radius:0.5px;"></div>
<div class="tl" style="left:565.0px;top:596.5px;font-size:3.9px;color:#8a8a8a;font-weight:400;">设立专区</div>
<div class="tl" style="left:589.0px;top:596.5px;font-size:3.9px;color:#8a8a8a;font-weight:400;">抖音AI助手大全</div>
<div class="tl" style="left:626.5px;top:596.5px;font-size:3.9px;color:#a0a0a0;font-weight:400;">小红书</div>
<div class="abs" style="left:545.6px;top:609.4px;width:15.2px;height:15.2px;background:#2b2b2b;border-radius:2.5px;"></div>
<div class="abs" style="left:548.2px;top:614.5px;width:10.0px;height:1.7px;background:rgba(255,255,255,.8);border-radius:0.5px;"></div>
<div class="abs" style="left:549.2px;top:617.8px;width:8.0px;height:1.7px;background:rgba(255,255,255,.7);border-radius:0.5px;"></div>
<div class="t" style="left:553.2px;top:630.0px;font-size:3.4px;color:#8c8c8c;font-weight:400;">小说推文专栏</div>
<div class="abs" style="left:578.3px;top:609.4px;width:15.2px;height:15.2px;background:#2b2b2b;border-radius:2.5px;"></div>
<div class="abs" style="left:580.9px;top:614.5px;width:10.0px;height:1.7px;background:rgba(255,255,255,.8);border-radius:0.5px;"></div>
<div class="abs" style="left:581.9px;top:617.8px;width:8.0px;height:1.7px;background:rgba(255,255,255,.7);border-radius:0.5px;"></div>
<div class="t" style="left:585.9px;top:630.0px;font-size:3.4px;color:#8c8c8c;font-weight:400;">文案创作</div>
<div class="abs" style="left:610.7px;top:609.4px;width:15.2px;height:15.2px;background:#2b2b2b;border-radius:2.5px;"></div>
<div class="abs" style="left:613.3px;top:614.5px;width:10.0px;height:1.7px;background:rgba(255,255,255,.8);border-radius:0.5px;"></div>
<div class="abs" style="left:614.3px;top:617.8px;width:8.0px;height:1.7px;background:rgba(255,255,255,.7);border-radius:0.5px;"></div>
<div class="t" style="left:618.3px;top:630.0px;font-size:3.4px;color:#8c8c8c;font-weight:400;">调节内容润色</div>
<div class="abs" style="left:545.6px;top:641.9px;width:15.2px;height:15.2px;background:#2b2b2b;border-radius:2.5px;"></div>
<div class="abs" style="left:548.2px;top:647.0px;width:10.0px;height:1.7px;background:rgba(255,255,255,.8);border-radius:0.5px;"></div>
<div class="abs" style="left:549.2px;top:650.3px;width:8.0px;height:1.7px;background:rgba(255,255,255,.7);border-radius:0.5px;"></div>
<div class="t" style="left:553.2px;top:662.5px;font-size:3.4px;color:#8c8c8c;font-weight:400;">小说续写</div>
<div class="abs" style="left:578.3px;top:641.9px;width:15.2px;height:15.2px;background:#2b2b2b;border-radius:2.5px;"></div>
<div class="abs" style="left:580.9px;top:647.0px;width:10.0px;height:1.7px;background:rgba(255,255,255,.8);border-radius:0.5px;"></div>
<div class="abs" style="left:581.9px;top:650.3px;width:8.0px;height:1.7px;background:rgba(255,255,255,.7);border-radius:0.5px;"></div>
<div class="t" style="left:585.9px;top:662.5px;font-size:3.4px;color:#8c8c8c;font-weight:400;">标题党文案…</div>
<div class="abs" style="left:610.7px;top:641.9px;width:15.2px;height:15.2px;background:#2b2b2b;border-radius:2.5px;"></div>
<div class="abs" style="left:613.3px;top:647.0px;width:10.0px;height:1.7px;background:rgba(255,255,255,.8);border-radius:0.5px;"></div>
<div class="abs" style="left:614.3px;top:650.3px;width:8.0px;height:1.7px;background:rgba(255,255,255,.7);border-radius:0.5px;"></div>
<div class="t" style="left:618.3px;top:662.5px;font-size:3.4px;color:#8c8c8c;font-weight:400;">视角生成</div>
<div class="abs" style="left:545.6px;top:674.4px;width:15.2px;height:15.2px;background:#2b2b2b;border-radius:2.5px;"></div>
<div class="abs" style="left:548.2px;top:679.5px;width:10.0px;height:1.7px;background:rgba(255,255,255,.8);border-radius:0.5px;"></div>
<div class="abs" style="left:549.2px;top:682.8px;width:8.0px;height:1.7px;background:rgba(255,255,255,.7);border-radius:0.5px;"></div>
<div class="t" style="left:553.2px;top:695.0px;font-size:3.4px;color:#8c8c8c;font-weight:400;">文案去重归…</div>
<div class="abs" style="left:578.3px;top:674.4px;width:15.2px;height:15.2px;background:#2b2b2b;border-radius:2.5px;"></div>
<div class="abs" style="left:580.9px;top:679.5px;width:10.0px;height:1.7px;background:rgba(255,255,255,.8);border-radius:0.5px;"></div>
<div class="abs" style="left:581.9px;top:682.8px;width:8.0px;height:1.7px;background:rgba(255,255,255,.7);border-radius:0.5px;"></div>
<div class="t" style="left:585.9px;top:695.0px;font-size:3.4px;color:#8c8c8c;font-weight:400;">趣味答辩</div>
<div class="abs" style="left:610.7px;top:674.4px;width:15.2px;height:15.2px;background:#2b2b2b;border-radius:2.5px;"></div>
<div class="abs" style="left:613.3px;top:679.5px;width:10.0px;height:1.7px;background:rgba(255,255,255,.8);border-radius:0.5px;"></div>
<div class="abs" style="left:614.3px;top:682.8px;width:8.0px;height:1.7px;background:rgba(255,255,255,.7);border-radius:0.5px;"></div>
<div class="t" style="left:618.3px;top:695.0px;font-size:3.4px;color:#8c8c8c;font-weight:400;">用小红书策略</div>
<div class="abs" style="left:648.0px;top:508.3px;width:2.0px;height:2.0px;background:#8ab4f0;border-radius:50%;"></div>
<div class="tl" style="left:651.0px;top:509.3px;font-size:3.55px;color:#5a9ae8;font-weight:400;">视频B平台支持看样机，未知用不着去找视频认证图8！</div>
<div class="abs" style="left:649.0px;top:515.7px;width:100.7px;height:24.0px;background:#fff;border-radius:1.5px;"></div>
<div class="tl" style="left:651.0px;top:519.3px;font-size:3.5px;color:#c0c0c0;font-weight:400;">长按粘贴需要去水印的视频链接…</div>
<div class="abs" style="left:649.0px;top:545.5px;width:2.4px;height:2.4px;background:#999;border-radius:50%;"></div>
<div class="tl" style="left:653.0px;top:546.8px;font-size:3.6px;color:#444;font-weight:700;">请先点击粘贴簿</div>
<div class="abs" style="left:729.5px;top:545.5px;width:2.4px;height:2.4px;background:#777;border-radius:50%;"></div>
<div class="tl" style="left:733.0px;top:546.8px;font-size:3.6px;color:#444;font-weight:700;">清空链接</div>
<div class="abs" style="left:648.3px;top:552.2px;width:72.7px;height:13.6px;background:linear-gradient(90deg,#3fa0f8,#4f7cf2 60%,#6a5cf0);border-radius:7px;"></div>
<div class="abs" style="left:725.6px;top:552.2px;width:24.0px;height:13.6px;background:linear-gradient(90deg,#3fa0f8,#4f7cf2 60%,#6a5cf0);border-radius:7px;"></div>
<div class="abs" style="left:671.5px;top:557.8px;width:3.0px;height:2.4px;background:rgba(255,255,255,.85);border-radius:1px;"></div>
<div class="tl" style="left:676.0px;top:559.2px;font-size:3.9px;color:#fff;font-weight:400;">立即解析</div>
<div class="abs" style="left:730.5px;top:557.3px;width:3.0px;height:3.0px;background:rgba(255,255,255,.85);border-radius:0.6px;"></div>
<div class="tl" style="left:735.0px;top:559.2px;font-size:3.9px;color:#fff;font-weight:400;">粘贴</div>
<div class="abs" style="left:649.0px;top:572.8px;width:2.4px;height:2.4px;background:#999;border-radius:50%;"></div>
<div class="tl" style="left:653.0px;top:574.0px;font-size:3.6px;color:#444;font-weight:700;">暂无解析结果</div>
<div class="abs" style="left:740.5px;top:570.5px;width:6.5px;height:6.5px;background:transparent;border-radius:50%;border:.8px solid #7ab0f0;"></div>
<div class="abs" style="left:761.0px;top:508.3px;width:2.0px;height:2.0px;background:#8ab4f0;border-radius:50%;"></div>
<div class="tl" style="left:764.0px;top:509.3px;font-size:3.5px;color:#5a9ae8;font-weight:400;">你可以输入你想要转语音的文本，或者为MM弹幕做配音。</div>
<div class="abs" style="left:761.4px;top:515.7px;width:100.0px;height:51.5px;background:#fff;border-radius:1.5px;"></div>
<div class="tl" style="left:763.5px;top:520.0px;font-size:3.5px;color:#c0c0c0;font-weight:400;">输入你的文本…</div>
<div class="abs" style="left:761.5px;top:574.8px;width:3.0px;height:2.5px;background:#555;border-radius:0.5px;"></div>
<div class="tl" style="left:766.0px;top:576.2px;font-size:3.8px;color:#333;font-weight:700;">启用高级功能(Pro)</div>
<div class="abs" style="left:851.0px;top:573.5px;width:9.5px;height:4.5px;background:#fff;border-radius:2.2px;box-shadow:0 0 1px #bbb;"></div>
<div class="abs" style="left:761.5px;top:583.2px;width:2.4px;height:2.4px;background:#888;border-radius:50%;"></div>
<div class="tl" style="left:766.0px;top:584.4px;font-size:3.5px;color:#444;font-weight:700;">当前文本长度</div>
<div class="abs" style="left:846.5px;top:583.2px;width:2.4px;height:2.4px;background:#888;border-radius:50%;"></div>
<div class="tl" style="left:850.0px;top:584.4px;font-size:3.4px;color:#555;font-weight:400;">0/1000</div>
<div class="abs" style="left:761.5px;top:590.7px;width:2.4px;height:2.4px;background:#888;border-radius:50%;"></div>
<div class="tl" style="left:766.0px;top:591.9px;font-size:3.5px;color:#444;font-weight:700;">角色:</div>
<div class="tl" style="left:775.5px;top:591.9px;font-size:3.5px;color:#5a9cf0;font-weight:400;">晓晓晓…</div>
<div class="abs" style="left:836.5px;top:590.7px;width:2.4px;height:2.4px;background:#888;border-radius:50%;"></div>
<div class="tl" style="left:840.5px;top:591.9px;font-size:3.5px;color:#444;font-weight:700;">选择配音角色</div>
<div class="abs" style="left:761.5px;top:598.3px;width:2.4px;height:2.4px;background:#888;border-radius:50%;"></div>
<div class="tl" style="left:766.0px;top:599.5px;font-size:3.5px;color:#444;font-weight:700;">速率:</div>
<div class="tl" style="left:775.5px;top:599.5px;font-size:3.5px;color:#5a9cf0;font-weight:400;">0%</div>
<div class="abs" style="left:850.0px;top:598.3px;width:2.4px;height:2.4px;background:#888;border-radius:50%;"></div>
<div class="tl" style="left:854.0px;top:599.5px;font-size:3.5px;color:#444;font-weight:700;">重置</div>
<div class="abs" style="left:761.0px;top:606.0px;width:50.0px;height:1.2px;background:#5aa0f0;border-radius:0.6px;"></div>
<div class="abs" style="left:811.0px;top:606.0px;width:45.0px;height:1.2px;background:#e2e4ea;border-radius:0.6px;"></div>
<div class="abs" style="left:808.5px;top:603.3px;width:6.5px;height:6.5px;background:#fff;border-radius:50%;box-shadow:0 0 1.500px #999;"></div>
<div class="abs" style="left:761.5px;top:612.8px;width:2.4px;height:2.4px;background:#888;border-radius:50%;"></div>
<div class="tl" style="left:766.0px;top:614.0px;font-size:3.5px;color:#444;font-weight:700;">请先粘贴簿</div>
<div class="abs" style="left:843.0px;top:612.8px;width:2.4px;height:2.4px;background:#777;border-radius:50%;"></div>
<div class="tl" style="left:847.0px;top:614.0px;font-size:3.5px;color:#444;font-weight:700;">清空内容</div>
<div class="abs" style="left:760.8px;top:619.3px;width:101.2px;height:13.0px;background:linear-gradient(90deg,#3fa0f8,#4f7cf2 60%,#6a5cf0);border-radius:6.5px;"></div>
<div class="abs" style="left:796.0px;top:625.0px;width:3.5px;height:2.0px;background:rgba(255,255,255,.9);border-radius:0.6px;"></div>
<div class="tl" style="left:801.0px;top:626.0px;font-size:3.9px;color:#fff;font-weight:400;">立即生成语音</div>
<div class="abs" style="left:761.5px;top:638.8px;width:2.4px;height:2.4px;background:#888;border-radius:50%;"></div>
<div class="tl" style="left:766.0px;top:640.0px;font-size:3.5px;color:#444;font-weight:700;">语音示例</div>
<div class="abs" style="left:761.4px;top:646.0px;width:100.0px;height:39.3px;background:#fff;border-radius:1.5px;"></div>
<div class="abs" style="left:766.0px;top:665.2px;width:4.5px;height:1.0px;background:#7ab0f0;border-radius:0.5px;"></div>
<div class="tl" style="left:775.0px;top:652.3px;font-size:3.45px;color:#4e4e4e;font-weight:700;">在五天金前后，以五天金金最新书记，听说老</div>
<div class="tl" style="left:775.0px;top:657.7px;font-size:3.45px;color:#4e4e4e;font-weight:700;">书记般看我为代表的“保洁员”，以五天金金</div>
<div class="tl" style="left:775.0px;top:663.1px;font-size:3.45px;color:#4e4e4e;font-weight:700;">最准基。其中月影书记带话最为代表的“秘书</div>
<div class="tl" style="left:775.0px;top:668.5px;font-size:3.45px;color:#4e4e4e;font-weight:700;">长”特务杀毛，不分好码，变后金房中正兴致</div>
<div class="tl" style="left:775.0px;top:673.9px;font-size:3.45px;color:#4e4e4e;font-weight:700;">盎的时候。五名听打眼花降落当的手爆炸，</div>
<div class="tl" style="left:775.0px;top:679.3px;font-size:3.45px;color:#4e4e4e;font-weight:700;">为五天金的有事大会辨得好的气温。</div>
<div class="abs" style="left:852.0px;top:662.5px;width:3.5px;height:5.5px;background:#999;border-radius:0.6px;"></div>
<div class="abs" style="left:761.5px;top:692.5px;width:2.4px;height:2.4px;background:#888;border-radius:50%;"></div>
<div class="tl" style="left:766.0px;top:693.7px;font-size:3.5px;color:#444;font-weight:700;">暂无合成结果</div>
<div class="abs" style="left:874.0px;top:508.3px;width:2.0px;height:2.0px;background:#8ab4f0;border-radius:50%;"></div>
<div class="tl" style="left:877.0px;top:509.3px;font-size:3.45px;color:#5a9ae8;font-weight:400;">由于需要提交与文件，整件的转换人(AI)相关位置(模拟)计</div>
<div class="tl" style="left:874.0px;top:514.6px;font-size:3.45px;color:#5a9ae8;font-weight:400;">算。还请您耐心使用。</div>
<div class="tl" style="left:909.0px;top:514.6px;font-size:3.45px;color:#ee5a4a;font-weight:400;">(20M内时正确概率优)</div>
<div class="abs" style="left:874.8px;top:522.0px;width:100.0px;height:22.3px;background:#fff;border-radius:1.5px;"></div>
<div class="tl" style="left:877.0px;top:526.0px;font-size:3.5px;color:#c0c0c0;font-weight:400;">长按粘贴视频链接…</div>
<div class="abs" style="left:874.8px;top:550.8px;width:2.4px;height:2.4px;background:#999;border-radius:50%;"></div>
<div class="tl" style="left:879.0px;top:552.0px;font-size:3.6px;color:#444;font-weight:700;">请先点击粘贴簿</div>
<div class="abs" style="left:956.0px;top:550.8px;width:2.4px;height:2.4px;background:#777;border-radius:50%;"></div>
<div class="tl" style="left:960.0px;top:552.0px;font-size:3.6px;color:#444;font-weight:700;">清空链接</div>
<div class="abs" style="left:873.9px;top:557.5px;width:72.9px;height:13.6px;background:linear-gradient(90deg,#3fa0f8,#4f7cf2 60%,#6a5cf0);border-radius:7px;"></div>
<div class="abs" style="left:951.5px;top:557.5px;width:24.0px;height:13.6px;background:linear-gradient(90deg,#3fa0f8,#4f7cf2 60%,#6a5cf0);border-radius:7px;"></div>
<div class="abs" style="left:894.5px;top:563.2px;width:3.0px;height:2.4px;background:rgba(255,255,255,.85);border-radius:1px;"></div>
<div class="tl" style="left:899.0px;top:564.5px;font-size:3.9px;color:#fff;font-weight:400;">立即提取文案</div>
<div class="abs" style="left:956.5px;top:562.7px;width:3.0px;height:3.0px;background:rgba(255,255,255,.85);border-radius:0.6px;"></div>
<div class="tl" style="left:961.0px;top:564.5px;font-size:3.9px;color:#fff;font-weight:400;">粘贴</div>
<div class="abs" style="left:874.8px;top:577.8px;width:2.4px;height:2.4px;background:#7ab0f0;border-radius:50%;"></div>
<div class="tl" style="left:879.0px;top:579.0px;font-size:3.6px;color:#4a8cf0;font-weight:700;">暂无提取结果</div>
<div class="abs" style="left:966.5px;top:575.5px;width:6.5px;height:6.5px;background:transparent;border-radius:50%;border:.8px solid #7ab0f0;"></div>
</div>
</div>

</div>
<div id="side" class="abs"></div>
<div id="status" class="abs"></div>
<!-- logo -->
<svg style="left:6px;top:1px" width="20" height="20" viewBox="0 0 20 20"><defs><linearGradient id="lg" x1="0" y1="0" x2="0" y2="1"><stop offset="0" stop-color="#3fd0a0"/><stop offset="1" stop-color="#1fa57c"/></linearGradient></defs><rect x="0" y="0" width="20" height="20" rx="4" fill="url(#lg)"/><path d="M4.5 5.2v9.6l11-9.6v9.6z" fill="none" stroke="#fff" stroke-width="2.1" stroke-linejoin="round"/></svg>
<div class="tl" style="left:30px;top:11.5px;font-size:10px;color:#222">亿图脑图<span style="font-size:11px">MindMaster</span><span style="letter-spacing:-.5px;margin-left:-.5px">（试用版）</span></div>
<!-- quick icons -->
<svg style="left:199px;top:4px" width="180" height="16" viewBox="199 4 180 16" fill="none" stroke="#333" stroke-width="1.1" stroke-linecap="round" stroke-linejoin="round">
<path d="M204.5 6.2l-2.6 2.6 2.6 2.6M202.2 8.8h5.2a3.2 3.2 0 0 1 0 6.4h-1.6"/>
<path d="M216.5 10.5h4l-2 2.4z" fill="#333" stroke="none"/>
<g stroke="#b9bcc6"><path d="M236.5 6.2l2.6 2.6-2.6 2.6M238.8 8.8h-4.6a3.2 3.2 0 0 0 0 6.4h1.2"/></g>
<rect x="249.5" y="5.5" width="11" height="11" rx="1"/><path d="M255 8.6v4.8M252.6 11h4.8"/>
<path d="M270.5 15.5v-9h4l1.5 1.8h5.5v2.2M270.5 15.5l2-5h10.5l-2 5z"/>
<path d="M291.5 5.5h11v11h-11zM294.5 5.5v4.5h5.5v-4.5"/>
<path d="M313.5 9.5v-4h8v4M313.5 14.5h-2.500v-5h13v5h-2.500M313.500 12.500h8v4h-8z"/>
<path d="M337 6.500h-5.500v10h10v-4.500M335.500 12.500c0-3.500 2-5.500 6-5.500M339.500 5l2.500 2-2.500 2"/>
<path d="M347.5 10.500h4l-2 2.400z" fill="#333" stroke="none"/>
<path d="M359 9h4.500M359.300 11.300h4l-2 2.400z" fill="#333"/>
</svg>
<!-- VIP -->
<div class="abs" style="left:1372px;top:2px;width:70px;height:18px;border-radius:9px;background:linear-gradient(90deg,#fbe27c,#fde98f 60%,#f8dc6a)"></div>
<svg style="left:1378px;top:5px" width="12" height="12" viewBox="0 0 12 12" fill="none" stroke="#222" stroke-width="1.1" stroke-linecap="round" stroke-linejoin="round"><path d="M0.800 1.500h1.800l1.400 6h5.600l1.200-4.300h-7.600"/><circle cx="4.800" cy="9.800" r=".7" fill="#222"/><circle cx="8.800" cy="9.800" r=".7" fill="#222"/></svg>
<div class="tl" style="left:1394px;top:11.5px;font-size:10.5px;font-weight:700;color:#1d1d1d">开通VIP</div>
<div class="abs" style="left:1448px;top:1.500px;width:20px;height:20px;border-radius:50%;background:#fbf6e6;border:1.500px solid #e6d9ae"></div>
<div class="t" style="left:1458.5px;top:11.800px;font-size:10.500px;font-weight:700;color:#5a4a2a">E</div>
<svg style="left:1500px;top:4px" width="70" height="16" viewBox="1500 4 70 16" fill="none" stroke="#333" stroke-width="1"><path d="M1504 11.500h9"/><path d="M1530.500 9.500h7v7h-7zM1532.500 9.500v-2.500h7v7h-2"/><path d="M1557 7l9 9M1566 7l-9 9"/></svg>

<div class="abs" style="left:65px;top:24px;width:57px;height:21px;background:#f2f2f7;border-radius:6px 6px 0 0"></div>
<div class="t" style="left:33.500px;top:34.500px;font-size:10px">文件</div>
<div class="t" style="left:93px;top:34.500px;font-size:10px;font-weight:700;color:#111">开始</div>
<div class="t" style="left:158.500px;top:34.500px;font-size:10px">页面样式</div>
<div class="t" style="left:230px;top:34.500px;font-size:10px">幻灯片</div>
<div class="t" style="left:290.500px;top:34.500px;font-size:10px">高级</div>
<div class="t" style="left:346.500px;top:34.500px;font-size:10px">视图</div>
<div class="t" style="left:407.500px;top:34.500px;font-size:10px">AI</div>
<div class="abs" style="left:416px;top:26px;width:23px;height:10.500px;border-radius:6px 6px 6px 1px;background:linear-gradient(90deg,#f04fd0,#f6455a 60%,#f55a2c)"></div>
<div class="t" style="left:427.500px;top:31.200px;font-size:7.500px;font-weight:700;font-style:italic;color:#fff">Hot</div>
<!-- right -->
<svg style="left:1414px;top:26px" width="160" height="16" viewBox="1414 26 160 16" fill="none" stroke="#333" stroke-width="1" stroke-linecap="round" stroke-linejoin="round">
<path d="M1426.500 28.500l-10.500 4.800 3.600 1.500 5.200-4.600-3.600 5.400v3.400l1.900-2.500 2 .9z"/>
<circle cx="1469" cy="33.500" r="1.900"/><circle cx="1476.500" cy="29.800" r="1.900"/><circle cx="1476.500" cy="37.200" r="1.900"/><path d="M1470.700 32.600l4.100-2M1470.700 34.400l4.100 2"/>
<circle cx="1526" cy="33.500" r="5.200"/><path d="M1524.300 31.900a1.700 1.700 0 1 1 2.400 1.600c-.5.300-.7.600-.7 1.200M1526 36.300v.2"/>
<path d="M1536.500 32.700h3.600l-1.800 2.100z" fill="#333" stroke="none"/>
<path d="M1556 35.500l4.500-4.200 4.500 4.200"/>
</svg>
<div class="t" style="left:1442.500px;top:34px;font-size:10.500px">发布</div>
<div class="t" style="left:1495px;top:34px;font-size:10.500px">分享</div>

<div class="abs" style="left:7px;top:50px;width:47px;height:45px;background:#dddde0;border-radius:2px"></div>
<div class="sep" style="left:99px;top:53px;height:61px"></div>
<div class="sep" style="left:239px;top:53px;height:61px"></div>
<div class="sep" style="left:423.5px;top:53px;height:61px"></div>
<div class="sep" style="left:590.5px;top:53px;height:32px"></div>
<div class="sep" style="left:885.5px;top:53px;height:61px"></div>
<div class="sep" style="left:952.5px;top:53px;height:61px"></div>
<div class="t" style="left:31px;top:81.5px;font-size:10px">思维导图</div>
<div class="t" style="left:74px;top:81.5px;font-size:10px">大纲</div>
<div class="t dis" style="left:123.5px;top:81.5px;font-size:10px">粘贴</div>
<svg style="left:120.5px;top:90px" width="6" height="4" viewBox="0 0 6 4"><path d="M0.3 0.3h5.400l-2.700 3.200z" fill="#a4a4a8"/></svg>
<div class="t dis" style="left:214px;top:81.5px;font-size:10px">格式刷</div>
<div class="t" style="left:264px;top:81.5px;font-size:10px">主题</div>
<svg style="left:261px;top:90px" width="6" height="4" viewBox="0 0 6 4"><path d="M0.3 0.3h5.400l-2.700 3.200z" fill="#2e2e2e"/></svg>
<div class="t" style="left:303.5px;top:81.5px;font-size:10px">子主题</div>
<div class="t" style="left:347px;top:81.5px;font-size:10px">浮动主题</div>
<div class="t" style="left:395px;top:81.5px;font-size:10px">多个主题</div>
<div class="t" style="left:448.3px;top:81.5px;font-size:10px">关系线</div>
<svg style="left:445.3px;top:90px" width="6" height="4" viewBox="0 0 6 4"><path d="M0.3 0.3h5.400l-2.700 3.200z" fill="#2e2e2e"/></svg>
<div class="t dis" style="left:487.3px;top:81.5px;font-size:10px">标注</div>
<div class="t dis" style="left:527px;top:81.5px;font-size:10px">外框</div>
<div class="t dis" style="left:566.5px;top:81.5px;font-size:10px">概要</div>
<div class="t dis" style="left:615.8px;top:81.5px;font-size:10px">注释</div>
<div class="t dis" style="left:655.8px;top:81.5px;font-size:10px">图标</div>
<svg style="left:652.8px;top:90px" width="6" height="4" viewBox="0 0 6 4"><path d="M0.3 0.3h5.400l-2.700 3.200z" fill="#a4a4a8"/></svg>
<div class="t" style="left:695.4px;top:81.5px;font-size:10px">图片</div>
<svg style="left:692.4px;top:90px" width="6" height="4" viewBox="0 0 6 4"><path d="M0.3 0.3h5.400l-2.700 3.200z" fill="#2e2e2e"/></svg>
<div class="t" style="left:735px;top:81.5px;font-size:10px">公式</div>
<svg style="left:732px;top:90px" width="6" height="4" viewBox="0 0 6 4"><path d="M0.3 0.3h5.400l-2.700 3.200z" fill="#2e2e2e"/></svg>
<div class="t dis" style="left:777.5px;top:81.5px;font-size:10px">双向链接</div>
<svg style="left:774.5px;top:90px" width="6" height="4" viewBox="0 0 6 4"><path d="M0.3 0.3h5.400l-2.700 3.200z" fill="#a4a4a8"/></svg>
<div class="t" style="left:820.7px;top:81.5px;font-size:10px">编号</div>
<svg style="left:817.7px;top:90px" width="6" height="4" viewBox="0 0 6 4"><path d="M0.3 0.3h5.400l-2.700 3.200z" fill="#2e2e2e"/></svg>
<div class="t" style="left:860px;top:81.5px;font-size:10px">更多</div>
<svg style="left:857px;top:90px" width="6" height="4" viewBox="0 0 6 4"><path d="M0.3 0.3h5.400l-2.700 3.200z" fill="#2e2e2e"/></svg>
<div class="t" style="left:918.5px;top:81.5px;font-size:10px">查找和替换</div>
<div class="tl dis" style="left:166.5px;top:62px;font-size:10px">剪切</div>
<div class="tl dis" style="left:166.5px;top:84px;font-size:10px">拷贝</div>
<div class="t grp" style="left:51.3px;top:105.3px">模式</div>
<div class="t grp" style="left:170.3px;top:105.3px">剪贴板</div>
<div class="t grp" style="left:332px;top:105.3px">主题</div>
<div class="t grp" style="left:654.7px;top:105.3px">插入</div>
<div class="t grp" style="left:919px;top:105.3px">查找</div>
<svg style="left:0;top:44px" width="1000" height="72" viewBox="0 44 1000 72"><g stroke="#2e2e2e" stroke-width="1.3" fill="none" stroke-linecap="round" stroke-linejoin="round"><circle cx="31" cy="62" r="2.300"/><circle cx="25.800" cy="57.300" r="1.700"/><circle cx="36.200" cy="57.300" r="1.700"/><circle cx="25.800" cy="66.700" r="1.700"/><circle cx="36.200" cy="66.700" r="1.700"/><path d="M27.100 58.500l2.200 1.900M34.900 58.500l-2.200 1.900M27.100 65.500l2.200-1.900M34.900 65.500l-2.200-1.900"/></g><g stroke="#2e2e2e" stroke-width="1.4" fill="none" stroke-linecap="round" stroke-linejoin="round"><path d="M68.300 57.200h.6M71.500 57.200h8.500M68.300 62h.6M71.500 62h8.500M68.300 66.800h.6M71.500 66.800h8.500"/></g><g stroke="#a4a4a8" stroke-width="1.2" fill="none" stroke-linecap="round" stroke-linejoin="round"><path d="M120.500 58h-2.500v11.500h11v-11.500h-2.500M120.800 56.500h5.400v2.800h-5.400z"/></g><g stroke="#a4a4a8" stroke-width="1.2" fill="none" stroke-linecap="round" stroke-linejoin="round"><circle cx="151" cy="63.500" r="2"/><circle cx="158" cy="63.500" r="2"/><path d="M152.200 61.900l5.300-6.900M156.800 61.900l-5.300-6.900"/></g><g stroke="#a4a4a8" stroke-width="1.2" fill="none" stroke-linecap="round" stroke-linejoin="round"><path d="M149 79.500h8v8h-8zM151.500 79.500v-2.500h8.500v8.500h-3"/></g><g stroke="#a4a4a8" stroke-width="1.2" fill="none" stroke-linecap="round" stroke-linejoin="round"><path d="M217.500 55.500l2 1.600-2.300 3.200 1.700 1.400-3.600 5.300-7-5.200 4.800-3.900 2 1.400z M210.500 63.500l4 3"/></g><g stroke="#2e2e2e" stroke-width="1.2" fill="none" stroke-linecap="round" stroke-linejoin="round"><path d="M261 61.500h10.500v7.500h-10.500zM258 65.500v-8.500h7.500v4"/><path d="M258 65.500h3"/></g><g stroke="#2e2e2e" stroke-width="1.2" fill="none" stroke-linecap="round" stroke-linejoin="round"><path d="M296.500 55h6v4h-6zM299.500 59v4.800h2.500M302 61h9v7.500h-9z"/></g><g stroke="#2e2e2e" stroke-width="1.2" fill="none" stroke-linecap="round" stroke-linejoin="round"><rect x="340.500" y="57" width="13" height="8.500" rx=".6"/></g><g stroke="#2e2e2e" stroke-width="1.2" fill="none" stroke-linecap="round" stroke-linejoin="round"><rect x="396" y="55.500" width="6" height="4" rx="2"/><rect x="396" y="64" width="6" height="4" rx="2"/><circle cx="388.800" cy="61.800" r="1.200" fill="#2e2e2e"/><path d="M389.500 61.300l6.500-3.600M389.500 62.300l6.500 3.600"/></g><g stroke="#2e2e2e" stroke-width="1.3" fill="none" stroke-linecap="round" stroke-linejoin="round"><rect x="441.200" y="55.300" width="1.800" height="1.800" fill="#2e2e2e"/><path d="M443 56.200h6a2.400 2.400 0 0 1 0 4.800h-3.500a2.400 2.400 0 0 0 0 4.800h7.500M451.500 64.200l2 1.600-2 1.600"/></g><g stroke="#a4a4a8" stroke-width="1.25" fill="none" stroke-linecap="round" stroke-linejoin="round"><path d="M481 68.500v-7a6.300 6.300 0 1 1 6.300 6.300h-5z"/><path d="M484.500 59.500h6M484.500 62h6M484.500 64.500h3.500"/></g><g stroke="#a4a4a8" stroke-width="1.25" fill="none" stroke-linecap="round" stroke-linejoin="round"><path d="M524.500 56.500h9.500v9h-9.500a4.500 4.500 0 0 1 0-9zM528.500 56.500v4.500h5.500"/></g><g stroke="#a4a4a8" stroke-width="1.25" fill="none" stroke-linecap="round" stroke-linejoin="round"><path d="M560 57h6M560 61.500h6M560 66h6M568.500 55.500c1.800 0 1.800 1 1.800 3s.3 3 1.700 3c-1.400 0-1.700 1-1.700 3s0 3-1.800 3"/></g><g stroke="#a4a4a8" stroke-width="1.25" fill="none" stroke-linecap="round" stroke-linejoin="round"><path d="M611 65.500l1-3.500 6.500-6.500 2.500 2.500-6.500 6.500zM617 57l2.500 2.500M616 68.500h.3M618.500 68.500h.3M621 68.500h.3"/></g><g stroke="#a4a4a8" stroke-width="1.25" fill="none" stroke-linecap="round" stroke-linejoin="round"><path d="M656 69.500c-3.500-3.300-6-5.500-6-8.500a6 6 0 0 1 12 0c0 3-2.500 5.200-6 8.500z"/><path d="M653.800 61.500a2.300 2.300 0 0 0 4.400 0M654.300 59h.2M657.500 59h.2"/></g><g stroke="#2e2e2e" stroke-width="1.2" fill="none" stroke-linecap="round" stroke-linejoin="round"><rect x="689" y="55.500" width="13" height="12" rx="1"/><circle cx="692.800" cy="59.300" r="1.100"/><path d="M689 65.500l4-3.500 3 2.500 3-3 3 3"/></g><g stroke="#2e2e2e" stroke-width="1.2" fill="none" stroke-linecap="round" stroke-linejoin="round"><path d="M740 57.500v-2h-10l5.500 6.500-5.500 6.500h10v-2"/></g><g stroke="#a4a4a8" stroke-width="1.25" fill="none" stroke-linecap="round" stroke-linejoin="round"><circle cx="777.500" cy="56.500" r="1.900"/><circle cx="772" cy="66.500" r="1.900"/><circle cx="783" cy="66.500" r="1.900"/><path d="M776.500 58.200l-3.600 6.600M778.500 58.200l3.600 6.600M774 66.500h7"/></g><g stroke="#2e2e2e" stroke-width="1.3" fill="none" stroke-linecap="round" stroke-linejoin="round"><path d="M818 56h9.500M818 61.500h9.500M818 67h9.500"/><path d="M814.300 55v2.500M813.800 60.500h1.200l-1.200 2.300h1.200M813.800 65.800h1.200v2.400h-1.200M813.800 67h1.200" stroke-width=".9"/></g><g stroke="#2e2e2e" stroke-width="1.2" fill="none" stroke-linecap="round" stroke-linejoin="round"><path d="M866 59.500v-4h-11.500v13h4.500"/><path d="M861.500 62h5.500M861.500 65h5.500M861.500 68h5.500"/></g><g stroke="#2e2e2e" stroke-width="1.2" fill="none" stroke-linecap="round" stroke-linejoin="round"><path d="M913 68.500h-1.500v-13h12v4"/><path d="M913.500 58.500h8M913.500 61h.3M916 61h.3"/><circle cx="920.500" cy="64.500" r="3.200"/><path d="M922.800 66.800l2.200 2.200"/></g></svg>

<div class="abs" style="left:0;top:117px;width:90px;height:20px;background:#fff"></div>
<svg style="left:7px;top:121px" width="11" height="11" viewBox="0 0 11 11"><rect x="0.500" y="2.800" width="9" height="7.700" rx="1.500" fill="#3ec08f"/><rect x="2.300" y=".5" width="6.500" height="6" rx="1.200" fill="#8ad9b9"/><rect x="2.800" y="5.400" width="4" height="2.600" rx=".6" fill="#e9fbf3"/></svg>
<div class="tl" style="left:24.500px;top:126.800px;font-size:10.500px;color:#333">导图2</div>
<div class="abs" style="left:73px;top:123.200px;width:7px;height:7px;border-radius:50%;background:#555"></div>
<svg style="left:95px;top:121px" width="11" height="11" viewBox="0 0 11 11"><path d="M5.500 .5v10M.5 5.500h10" stroke="#222" stroke-width="1.200"/></svg>
<div class="abs" style="left:1532px;top:117px;width:50px;height:20px;background:#fff"></div>
<svg style="left:1539px;top:121px" width="13" height="11" viewBox="0 0 13 11" fill="none" stroke="#333" stroke-width="1"><rect x=".5" y=".5" width="12" height="9.500" rx="1"/><path d="M8.500 .5v9.500"/></svg>
<div class="t" style="left:1567px;top:126.500px;font-size:10px">面板</div>

<!-- canvas v scrollbar -->
<div class="abs" style="left:1349px;top:137px;width:8px;height:691px;background:#fefefe"></div>
<div class="abs" style="left:1350.500px;top:323px;width:5.500px;height:255px;border-radius:3px;background:#d2d2d4"></div>
<!-- tabs -->
<div class="abs" style="left:1358px;top:137px;width:44px;height:32px;background:#dff1ec"></div>
<div class="abs" style="left:1358px;top:168px;width:44px;height:2px;background:#1fa37b"></div>
<div class="abs" style="left:1358px;top:170px;width:224px;height:1px;background:#e4e4ea"></div>
<svg style="left:1358px;top:137px" width="224" height="32" viewBox="1358 137 224 32" fill="none" stroke="#1e1e1e" stroke-width="1.500" stroke-linecap="round" stroke-linejoin="round">
<rect x="1373.500" y="145.800" width="14.600" height="14.200" rx="3.200" stroke="#2bb391" stroke-width="1.900"/><rect x="1377.600" y="150.400" width="6.600" height="4.800" rx="1" stroke="#2bb391" stroke-width="1.700"/>
<path d="M1424.800 146.600c.8 4.600 2.200 6.200 6.800 7.200-4.600 1-6 2.600-6.800 7.200-.8-4.600-2.200-6.200-6.800-7.200 4.600-1 6-2.600 6.800-7.200z" stroke-width="1.600"/><path d="M1417.400 144.700v3.200M1415.800 146.300h3.200M1431.400 159.100v3.200M1429.800 160.700h3.200" stroke-width="1.200"/>
<path d="M1469 161.200c-3.600-2.600-6.300-4.600-6.300-8.300a6.300 6.300 0 0 1 12.600 0c0 3.700-2.700 5.700-6.300 8.300z"/><path d="M1466.600 154.300a2.500 2.500 0 0 0 4.800 0M1466.900 151.200h.2M1470.900 151.200h.2" stroke-width="1.400"/>
<path d="M1511.18 146.58A2.600 2.600 0 0 1 1515.22 146.58Q1516.14 149.55 1519.25 149.51A2.600 2.600 0 0 1 1520.50 153.35Q1517.96 155.15 1518.96 158.09A2.600 2.600 0 0 1 1515.69 160.46Q1513.20 158.60 1510.71 160.46A2.600 2.600 0 0 1 1507.44 158.09Q1508.44 155.15 1505.90 153.35A2.600 2.600 0 0 1 1507.15 149.51Q1510.26 149.55 1511.18 146.58z"/><circle cx="1513.200" cy="153.600" r="2.300"/>
<g stroke="#5c5c5c"><path d="M1557.500 146.800a6.800 6.800 0 1 0 0 13.600" /><path d="M1557.500 146.800a6.800 6.800 0 0 1 0 13.600" stroke-dasharray=".8 2.400"/><path d="M1557.500 150v3.800l2.500 1.600"/></g>
</svg>
<!-- layout -->
<div class="tl" style="left:1370px;top:189.500px;font-size:11px;font-weight:700;color:#222">布局</div>
<div class="tl sp" style="left:1370px;top:227px">布局</div>
<div class="box" style="left:1496.500px;top:207px;width:72px;height:38.500px"></div>
<svg style="left:1506px;top:217px" width="60" height="20" viewBox="1506 217 60 20" fill="none" stroke="#222" stroke-width="1"><g fill="#2a2a2a" stroke="none"><rect x="1507.600" y="218.200" width="4.400" height="2.700" rx=".5"/><rect x="1520" y="218.200" width="4.400" height="2.700" rx=".5"/><rect x="1507.600" y="231.200" width="4.400" height="2.700" rx=".5"/><rect x="1520" y="231.200" width="4.400" height="2.700" rx=".5"/><rect x="1513.400" y="225" width="5.200" height="2.700" rx=".5"/></g><path d="M1512 219.500h2.600v13h-2.600M1520 219.500h-2.600v13h2.600" stroke="#777" stroke-width=".7"/><path d="M1554.300 225.500l2.500 2.500 2.500-2.500" stroke-width="1.300" stroke-linecap="round" stroke-linejoin="round"/></svg>
<div class="tl sp" style="left:1370px;top:268.300px">主题间距</div>
<div class="tl sp" style="left:1370px;top:300px">水平</div>
<div class="box" style="left:1395px;top:290.500px;width:46px;height:18.500px;border-radius:4px"></div>
<div class="tl sp" style="left:1402px;top:300px">30</div>
<div class="tl sp" style="left:1497.500px;top:300px">垂直</div>
<div class="box" style="left:1523px;top:290.500px;width:46px;height:18.500px;border-radius:4px"></div>
<div class="tl sp" style="left:1530px;top:300px">30</div>
<svg style="left:1430px;top:292px" width="140" height="16" viewBox="1430 292 140 16"><g fill="#222"><path d="M1432 297.500h4l-2-2.800zM1432 302h4l-2 2.800z"/><path d="M1560 297.500h4l-2-2.800zM1560 302h4l-2 2.800z"/></g><path d="M1430.500 294v12M1558.500 294v12" stroke="#ececf0"/></svg>
<div class="cb" style="left:1371px;top:323.500px"></div><div class="tl sp" style="left:1387px;top:329.300px">分支自由布局</div>
<div class="cb" style="left:1371px;top:350.500px"></div><div class="tl sp" style="left:1387px;top:356.300px">同级主题对齐</div>
<div class="cb" style="left:1371px;top:375.500px"></div><div class="tl sp" style="left:1387px;top:381.200px">灵活浮动主题</div>
<div class="cb" style="left:1371px;top:402px"></div><div class="tl sp" style="left:1387px;top:407.800px">主题层叠</div>
<div class="abs" style="left:1370px;top:426.500px;width:212px;height:1px;background:#e4e4ea"></div>
<!-- theme style -->
<div class="tl" style="left:1370px;top:445.500px;font-size:11px;font-weight:700;color:#222">主题风格</div>
<div class="tl sp" style="left:1370px;top:482.600px">主题风格</div>
<div class="box" style="left:1496.500px;top:463.500px;width:72px;height:38.500px"></div>
<svg style="left:1504px;top:470px" width="62" height="26" viewBox="1504 470 62 26" fill="none"><rect x="1508.500" y="479.500" width="12" height="6" rx="3" fill="#1c9a70"/><path d="M1520.500 482.500h5M1523 482.500c2 0 1.500-5.500 4-5.500M1523 482.500c2 0 1.500 5.500 4 5.500" stroke="#555" stroke-width=".8"/><rect x="1527" y="475" width="8" height="4" rx="1" stroke="#888" stroke-width=".8" fill="#fff"/><rect x="1525.500" y="480.500" width="8" height="4" rx="1" stroke="#888" stroke-width=".8" fill="#fff"/><rect x="1527" y="486" width="8" height="4" rx="1" stroke="#888" stroke-width=".8" fill="#fff"/><rect x="1537" y="475.500" width="4" height="3" rx="1" stroke="#9bd" stroke-width=".7"/><rect x="1537" y="486.500" width="4" height="3" rx="1" stroke="#9bd" stroke-width=".7"/><path d="M1554.300 481.500l2.500 2.500 2.500-2.500" stroke="#222" stroke-width="1.300" stroke-linecap="round" stroke-linejoin="round"/></svg>
<div class="tl sp" style="left:1370px;top:525.700px">彩虹色</div>
<div class="abs" style="left:1464px;top:513.500px;width:24.500px;height:24px;border:1px solid #d0d0d6;border-radius:4px;background:#f0f0f4"></div>
<svg style="left:1466px;top:516px" width="100" height="20" viewBox="1466 516 100 20">
<g><rect x="1469" y="518.500" width="15" height="14.500" rx="2" fill="#17a27a" stroke="#222" stroke-width="1"/><path d="M1469 523.300h15M1469 528.200h15M1476.500 518.500v14.500" stroke="#fff" stroke-width="1"/></g>
<g><rect x="1494.500" y="518.500" width="15" height="14.500" rx="2" fill="#f3c04a" stroke="#333" stroke-width="1"/><rect x="1495.500" y="519.500" width="6.500" height="4" fill="#f0a050"/><rect x="1502.500" y="519.500" width="6" height="4" fill="#7a8ee8"/><rect x="1495.500" y="524.300" width="6.500" height="4" fill="#f5d060"/><rect x="1502.500" y="524.300" width="6" height="4" fill="#59c0a0"/><rect x="1495.500" y="529" width="6.500" height="3.200" fill="#e86a6a"/><rect x="1502.500" y="529" width="6" height="3.200" fill="#5aa0e8"/><path d="M1494.500 523.900h15M1494.500 528.600h15M1502.200 518.500v14.500" stroke="#fff" stroke-width=".8"/></g>
<g><rect x="1519.500" y="518.500" width="15" height="14.500" rx="2" fill="#f0a030" stroke="#333" stroke-width="1"/><rect x="1520.500" y="524.300" width="13" height="4" fill="#e8604a"/><rect x="1520.500" y="529" width="13" height="3.200" fill="#3f8de0"/><path d="M1519.500 523.900h15M1519.500 528.600h15M1527 518.500v14.500" stroke="#fff" stroke-width=".8"/></g>
<g><rect x="1545" y="518.500" width="15" height="14.500" rx="2" fill="#2f8fe0" stroke="#333" stroke-width="1"/><rect x="1546" y="524.300" width="13" height="4" fill="#22a890"/><path d="M1545 523.900h15M1545 528.600h15M1552.500 518.500v14.500" stroke="#fff" stroke-width=".8"/></g>
</svg>
<div class="tl sp" style="left:1370px;top:560.600px">主题色</div>
<div class="box" style="left:1463.500px;top:549px;width:105px;height:22.500px"></div>
<svg style="left:1468px;top:552px" width="98" height="16" viewBox="1468 552 98 16"><g><rect x="1469.500" y="556.500" width="7" height="7" fill="#4f86f0"/><rect x="1476.500" y="556.500" width="7" height="7" fill="#8a8ee6"/><rect x="1483.500" y="556.500" width="7" height="7" fill="#f06a8a"/><rect x="1490.500" y="556.500" width="7" height="7" fill="#f08a70"/><rect x="1497.500" y="556.500" width="7" height="7" fill="#6a6ab0"/><rect x="1504.500" y="556.500" width="7" height="7" fill="#f0a030"/><rect x="1511.500" y="556.500" width="7" height="7" fill="#f5c040"/><rect x="1518.500" y="556.500" width="7" height="7" fill="#129a5a"/><rect x="1525.500" y="556.500" width="7" height="7" fill="#f07a7a"/><rect x="1532.500" y="556.500" width="7" height="7" fill="#45b5b0"/><rect x="1539.500" y="556.500" width="7" height="7" fill="#39b8a8"/></g><path d="M1554.300 558.500l2.500 2.500 2.500-2.500" stroke="#222" stroke-width="1.300" fill="none" stroke-linecap="round" stroke-linejoin="round"/></svg>
<div class="tl sp" style="left:1370px;top:593.500px">全局字体</div>
<div class="box" style="left:1463.500px;top:582px;width:105px;height:22.500px"></div>
<div class="tl" style="left:1468.500px;top:593.800px;font-size:6px;color:#333">Aa</div>
<div class="tl sp" style="left:1480px;top:593.500px;color:#222">微软雅黑 (大)</div>
<svg style="left:1552px;top:588px" width="10" height="10" viewBox="1552 588 10 10"><path d="M1554.300 591.500l2.500 2.500 2.500-2.500" stroke="#222" stroke-width="1.300" fill="none" stroke-linecap="round" stroke-linejoin="round"/></svg>
<div class="cb" style="left:1371px;top:619px"></div><div class="tl sp" style="left:1387px;top:624.800px">手绘效果</div>
<div class="abs" style="left:1370px;top:644px;width:212px;height:1px;background:#e4e4ea"></div>
<!-- background -->
<div class="tl" style="left:1370px;top:663.500px;font-size:11px;font-weight:700;color:#222">背景</div>
<div class="box" style="left:1370.500px;top:684px;width:198px;height:45px;border-radius:7px"></div>
<div class="abs" style="left:1375px;top:688px;width:44px;height:37px;border-radius:5px;background:#e0f2ed"></div>
<svg style="left:1380px;top:690px" width="180" height="18" viewBox="1380 690 180 18" fill="none" stroke="#222" stroke-width="1.100" stroke-linecap="round" stroke-linejoin="round">
<rect x="1390.500" y="692.500" width="12" height="12" rx="2"/><path d="M1391.500 703.500l10-10"/>
<rect x="1439.500" y="692.500" width="12" height="12" rx="2" stroke="#1c8a68"/><rect x="1442" y="695" width="7" height="7" fill="#17a27a" stroke="none"/>
<rect x="1488" y="692.500" width="12" height="12" rx="2" stroke="#444"/><rect x="1490.500" y="695" width="7" height="7" fill="#7fd0b4" stroke="none"/><path d="M1491 701.500l6-6M1491 698.500l3.300-3.300M1494 701.800l3.300-3.300" stroke="#2a9a78" stroke-width=".7"/>
<rect x="1536.500" y="692.500" width="12" height="12" rx="2"/><path d="M1536.500 701l3-3 2.500 2.500 2.500-2.500 4 3.500"/><circle cx="1544.500" cy="696.200" r=".9"/>
</svg>
<div class="t sp" style="left:1396.500px;top:717px">无</div>
<div class="t sp" style="left:1445.200px;top:717px">颜色</div>
<div class="t sp" style="left:1493.700px;top:717px">纹理</div>
<div class="t sp" style="left:1542.200px;top:717px">图片</div>
<div class="cb" style="left:1371px;top:749.500px"></div><div class="tl sp" style="left:1387px;top:755.400px">水印填充</div>

<!-- h scrollbar -->
<div class="abs" style="left:590px;top:821px;width:759px;height:7px;border-radius:3.500px;background:#d8d8da"></div>
<svg style="left:12px;top:834px" width="240" height="14" viewBox="12 834 240 14" fill="none" stroke="#333" stroke-width="1"><rect x="16.500" y="837.500" width="7.500" height="7"/><path d="M13.800 837v8M26.700 837v8"/><path d="M144.500 841.500h12M150.500 835.500v12" stroke-width="1.100"/><path d="M114.800 839.800h4.400l-2.200 2.600z" fill="#444" stroke="none"/><g stroke="#d2d4dc"><path d="M39.500 832v17M128.500 832v17M173.500 832v17M237.500 832v17"/></g></svg>
<div class="tl" style="left:48.500px;top:841.200px;font-size:10px;color:#222">页面-1</div>
<div class="tl" style="left:192px;top:841.200px;font-size:10px;font-weight:700;color:#1a9a74">页面-1</div>
<div class="tl" style="left:1186.500px;top:841.500px;font-size:10px;color:#222">主题计数:</div>
<div class="tl" style="left:1239.500px;top:841.500px;font-size:10px;color:#222">65</div>
<svg style="left:1252px;top:834px" width="84" height="14" viewBox="1252 834 84 14" fill="none" stroke="#333" stroke-width="1" stroke-linejoin="round"><path d="M1253.800 839.500l2-2.500h5l2 2.500-4.500 5.500z" fill="#f7b733" stroke="#f0a020" stroke-width=".6"/><path d="M1274 838l3.700-1 3.700 1 3.600-1v8.500l-3.600 1-3.700-1-3.700 1zM1277.700 837v8.500M1281.400 838v8.500" stroke-linejoin="miter"/><rect x="1298" y="836.500" width="11" height="10.500"/><rect x="1300.500" y="839" width="6" height="5.500"/><path d="M1303.500 836.500v2.500M1303.500 844.500v2.500"/><path d="M1321.500 840v-3.500h3.500M1328 836.500h3.500v3.500M1331.500 843.500v3.500h-3.500M1325 847h-3.500v-3.500M1324 839l1.800 1.800M1329 839l-1.800 1.800M1324 844.500l1.800-1.800M1329 844.500l-1.800-1.800"/></svg>
<!-- hidden-ish zoom controls under watermark -->
<svg style="left:1360px;top:834px" width="222" height="16" viewBox="1360 834 222 16" fill="none" stroke="#111" stroke-width="1.300"><path d="M1377 837.500a4.300 4.300 0 1 0 0 8" stroke-width="2"/><path d="M1345 841.500h5M1444 841.500h4" stroke="#444" stroke-width="1"/></svg>
<!-- watermark -->
<div class="tl" style="left:1332px;top:841.500px;font-size:20px;font-weight:900;color:rgba(135,135,138,.5);letter-spacing:.2px;transform:translate(0,-50%) scale(1.230,1);transform-origin:0 50%;font-family:'Liberation Sans',sans-serif">www.xunihaoku.com</div>
<!-- IME bar -->
<div class="abs" style="left:1452px;top:813.500px;width:125.500px;height:20.500px;background:#fff;border:1px solid #dfe6f2;border-radius:2px"></div>
<svg style="left:1428px;top:808px" width="30" height="30" viewBox="1428 808 30 30"><path d="M1431.500 815l17.500-4.500c1.500-.4 2.500 .3 2.900 1.600l3 17c.3 1.400-.4 2.400-1.700 2.700l-14.500 3.200c-1.400.3-2.400-.4-2.700-1.700z" fill="#f26a21"/><path d="M1449 817.500c-2-1.800-9-2.300-10.500.8-1.800 3.800 9.500 3 8.200 7.200-1 3.200-8 2.600-10.200.6" fill="none" stroke="#fff" stroke-width="3" stroke-linecap="round"/></svg>
<div class="t" style="left:1468px;top:824px;font-size:13px;font-weight:900;color:#1878d8">中</div>
<svg style="left:1480px;top:814px" width="96" height="20" viewBox="1480 814 96 20" fill="#1878d8"><circle cx="1485" cy="821.500" r="1.500" fill="none" stroke="#1878d8" stroke-width="1.200"/><path d="M1490.500 823.500a1.500 1.500 0 1 1 1.500 1.500c0 1-.5 2-1.500 2.600 .5-.8 .5-1.600 0-2.600z"/><rect x="1504.800" y="816.500" width="5" height="9" rx="2.500"/><path d="M1502.500 822.500a4.800 4.800 0 0 0 9.600 0M1507.300 827.500v3" fill="none" stroke="#1878d8" stroke-width="1.300"/><rect x="1521.500" y="819" width="13.500" height="10.500" rx="1.500"/><g fill="#fff"><rect x="1523.300" y="821" width="2" height="1.800"/><rect x="1526.300" y="821" width="2" height="1.800"/><rect x="1529.300" y="821" width="2" height="1.800"/><rect x="1532" y="821" width="1.500" height="1.800"/><rect x="1523.300" y="824" width="2" height="1.800"/><rect x="1526.300" y="824" width="2" height="1.800"/><rect x="1529.300" y="824" width="2" height="1.800"/><rect x="1532" y="824" width="1.500" height="1.800"/><rect x="1524.500" y="826.800" width="8" height="1.300"/></g><path d="M1543.500 818l-4 2.500 1.500 3 1.500-.7v7h9.500v-7l1.500 .7 1.500-3-4-2.500c-.8 1.300-2 1.800-3.500 1.800s-2.700-.5-3.500-1.800z"/><rect x="1562.500" y="818" width="4.800" height="4.800" rx="1"/><circle cx="1571.500" cy="820.400" r="2.500"/><rect x="1562.500" y="824.500" width="4.800" height="4.800" rx="1"/><rect x="1569" y="824.500" width="4.800" height="4.800" rx="1"/></svg>

</body>
</html>
